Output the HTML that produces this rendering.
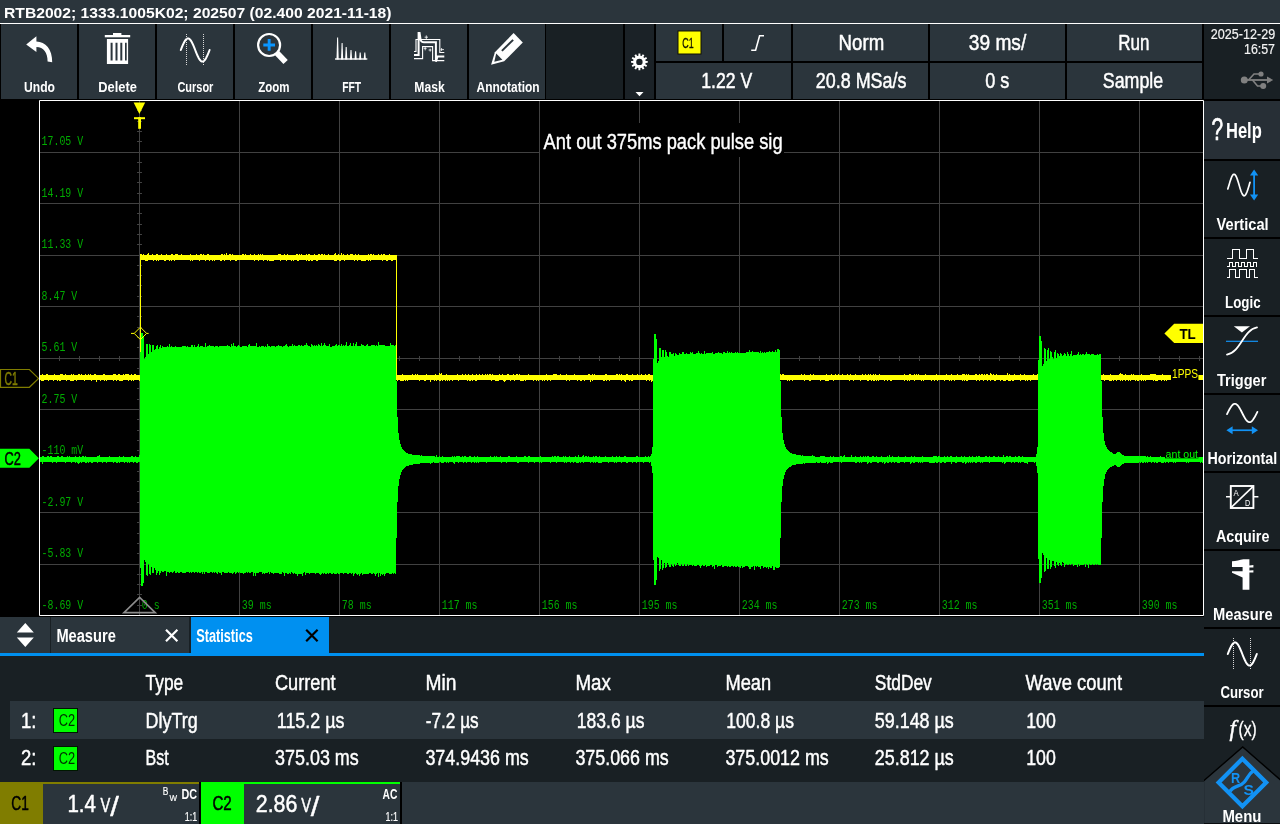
<!DOCTYPE html>
<html lang="en">
<head>
<meta charset="utf-8">
<title>RTB2002 oscilloscope - Ant out 375ms pack pulse sig</title>
<style>
  html, body { margin: 0; padding: 0; background: #000; }
  body { width: 1280px; height: 824px; overflow: hidden; }
  #screen { position: absolute; left: 0; top: 0; width: 1280px; height: 824px; background: #000; overflow: hidden; }
  svg { display: block; will-change: transform; }
  svg text { font-family: "Liberation Sans", "DejaVu Sans", sans-serif; white-space: pre; }
</style>
</head>
<body>
<div id="screen">
<svg width="1280" height="824" viewBox="0 0 1280 824">
<g id="titlebar">
<rect x="0" y="0" width="1280" height="23" fill="#2b353c"/>
<rect x="0" y="23" width="1280" height="1" fill="#ffffff"/>
<text x="4" y="18" font-size="14.6" fill="#ffffff" textLength="387.5" lengthAdjust="spacingAndGlyphs" font-weight="bold">RTB2002; 1333.1005K02; 202507 (02.400 2021-11-18)</text>
</g>
<g id="toolbar">
<rect x="1" y="24" width="76" height="75" fill="#2b353c"/>
<text x="24.0" y="92" font-size="15.5" fill="#ffffff" textLength="31" lengthAdjust="spacingAndGlyphs" font-weight="bold">Undo</text>
<rect x="79" y="24" width="76" height="75" fill="#2b353c"/>
<text x="98.3" y="92" font-size="15.5" fill="#ffffff" textLength="38.5" lengthAdjust="spacingAndGlyphs" font-weight="bold">Delete</text>
<rect x="157" y="24" width="76" height="75" fill="#2b353c"/>
<text x="177.4" y="92" font-size="15.5" fill="#ffffff" textLength="36" lengthAdjust="spacingAndGlyphs" font-weight="bold">Cursor</text>
<rect x="235" y="24" width="76" height="75" fill="#2b353c"/>
<text x="258.3" y="92" font-size="15.5" fill="#ffffff" textLength="31.3" lengthAdjust="spacingAndGlyphs" font-weight="bold">Zoom</text>
<rect x="313" y="24" width="76" height="75" fill="#2b353c"/>
<text x="342.2" y="92" font-size="15.5" fill="#ffffff" textLength="19" lengthAdjust="spacingAndGlyphs" font-weight="bold">FFT</text>
<rect x="391" y="24" width="76" height="75" fill="#2b353c"/>
<text x="414.3" y="92" font-size="15.5" fill="#ffffff" textLength="30.4" lengthAdjust="spacingAndGlyphs" font-weight="bold">Mask</text>
<rect x="469" y="24" width="76" height="75" fill="#2b353c"/>
<text x="476.5" y="92" font-size="15.5" fill="#ffffff" textLength="63.2" lengthAdjust="spacingAndGlyphs" font-weight="bold">Annotation</text>
<rect x="546" y="24" width="77" height="75" fill="#192024"/>
<rect x="625" y="24" width="29" height="75" fill="#1b2227"/>
<path d="M26.2 44.4 L36.4 36.2 L36.4 41.4 C45.5 41.6 52.4 49 52.2 62.2 L47.6 61.4 C47.6 52.6 43.6 47.2 36.4 47 L36.4 52 Z" fill="#fff"/>
<g fill="#fff"><rect x="113" y="33" width="8.4" height="2.4"/><rect x="104.8" y="35" width="25.4" height="2.3"/><path d="M106.9 39 H128.1 V64 H106.9 Z M110.6 42.8 V60.4 H112.6 V42.8 Z M115.5 42.8 V60.4 H117.5 V42.8 Z M120.3 42.8 V60.4 H122.3 V42.8 Z M125 42.8 V60.4 H126.7 V42.8 Z" fill-rule="evenodd"/></g>
<path d="M180.8 50 L181.52 48.19 L182.24 46.42 L182.96 44.73 L183.68 43.18 L184.4 41.8 L185.12 40.62 L185.84 39.66 L186.56 38.97 L187.28 38.54 L188 38.4 L188.72 38.54 L189.44 38.97 L190.16 39.66 L190.88 40.62 L191.6 41.8 L192.32 43.18 L193.04 44.73 L193.76 46.42 L194.48 48.19 L195.2 50 L195.92 51.81 L196.64 53.58 L197.36 55.27 L198.08 56.82 L198.8 58.2 L199.52 59.38 L200.24 60.34 L200.96 61.03 L201.68 61.46 L202.4 61.6 L203.12 61.46 L203.84 61.03 L204.56 60.34 L205.28 59.38 L206 58.2 L206.72 56.82 L207.44 55.27 L208.16 53.58 L208.88 51.81 L209.6 50" fill="none" stroke="#fff" stroke-width="2" stroke-linecap="round" stroke-linejoin="round"/>
<line x1="186.5" y1="34" x2="186.5" y2="65" stroke="#d8d8d8" stroke-width="1" stroke-dasharray="1 1" shape-rendering="crispEdges"/>
<line x1="203.5" y1="34" x2="203.5" y2="65" stroke="#d8d8d8" stroke-width="1" stroke-dasharray="1 1" shape-rendering="crispEdges"/>
<g><line x1="276" y1="52" x2="285.6" y2="62" stroke="#fff" stroke-width="6"/><circle cx="269.1" cy="45" r="11" fill="#2b353c" stroke="#fff" stroke-width="2.2"/><path d="M263.3 43.5 H267.7 V39 H270.6 V43.5 H275 V46.4 H270.6 V50.8 H267.7 V46.4 H263.3 Z" fill="#0a96ff"/></g>
<g fill="#fff"><rect x="335" y="58.2" width="32.3" height="1.6" opacity=".85"/>
<path d="M337.1 37.5 L338.1 37.5 L338.70000000000005 59.4 L336.5 59.4 Z"/>
<path d="M341.6 43 L342.6 43 L343.20000000000005 59.4 L341.0 59.4 Z"/>
<path d="M345.7 47 L346.7 47 L347.3 59.4 L345.09999999999997 59.4 Z"/>
<path d="M350.5 50 L351.5 50 L352.1 59.4 L349.9 59.4 Z"/>
<path d="M355.1 51.2 L356.1 51.2 L356.70000000000005 59.4 L354.5 59.4 Z"/>
<path d="M359.7 52.6 L360.7 52.6 L361.3 59.4 L359.09999999999997 59.4 Z"/>
<path d="M364.3 52.6 L365.3 52.6 L365.90000000000003 59.4 L363.7 59.4 Z"/>
</g>
<g fill="none" stroke="#fff" stroke-linejoin="miter"><path d="M414 51.5 H416 V39.5 H439.8 V52.5 H444.3" stroke-width="1.1"/><path d="M414 58.6 H422.6 V46.6 H432.6 V60.6 H444.3" stroke-width="1.1"/><path d="M414 55 H418.6 V33 L419.6 33 L420.6 40 Q421.4 42.2 424 42.2 H435.9 V61.6 L437.5 56.4 H444.3" stroke-width="2"/><path d="M424.6 37.2 H428 M426.3 35.4 V39 M423.6 48.6 H426.6 M425.2 47 V50.4 M428.6 50 H431.4 M430.2 48.6 V51.6 M440.6 49.6 H444 M441.6 48 V51" stroke-width="0.8"/></g>
<g><path d="M513.6 33.1 L522.8 42.5 L504.2 61.3 L491.1 64.8 L494.9 52.2 Z" fill="#fff"/><path d="M512.4 39.2 L513.8 40.6 L502.6 51.6 L501.2 50.2 Z" fill="#2b353c"/><path d="M496.2 53.6 L502.4 59.8 L494.3 61.8 Z" fill="#2b353c"/></g>
<path d="M647.74 60.93 L647.74 62.87 L645.62 62.89 L645.28 64.16 L647.11 65.24 L646.14 66.91 L644.3 65.86 L643.36 66.8 L644.41 68.64 L642.74 69.61 L641.66 67.78 L640.39 68.12 L640.37 70.24 L638.43 70.24 L638.41 68.12 L637.14 67.78 L636.06 69.61 L634.39 68.64 L635.44 66.8 L634.5 65.86 L632.66 66.91 L631.69 65.24 L633.52 64.16 L633.18 62.89 L631.06 62.87 L631.06 60.93 L633.18 60.91 L633.52 59.64 L631.69 58.56 L632.66 56.89 L634.5 57.94 L635.44 57 L634.39 55.16 L636.06 54.19 L637.14 56.02 L638.41 55.68 L638.43 53.56 L640.37 53.56 L640.39 55.68 L641.66 56.02 L642.74 54.19 L644.41 55.16 L643.36 57 L644.3 57.94 L646.14 56.89 L647.11 58.56 L645.28 59.64 L645.62 60.91 Z M642.6 61.9 A3.2 3.2 0 1 0 636.1999999999999 61.9 A3.2 3.2 0 1 0 642.6 61.9 Z" fill="#fff" fill-rule="evenodd"/>
<path d="M635.5 92 H643.5 L639.5 96.2 Z" fill="#fff"/>
</g>
<g id="info">
<rect x="656" y="24" width="66" height="37" fill="#2b353c"/>
<rect x="724" y="24" width="67" height="37" fill="#2b353c"/>
<rect x="656" y="63" width="135" height="36" fill="#2b353c"/>
<rect x="793" y="24" width="135" height="37" fill="#2b353c"/>
<rect x="793" y="63" width="135" height="36" fill="#2b353c"/>
<rect x="930" y="24" width="135" height="37" fill="#2b353c"/>
<rect x="930" y="63" width="135" height="36" fill="#2b353c"/>
<rect x="1067" y="24" width="135" height="37" fill="#2b353c"/>
<rect x="1067" y="63" width="135" height="36" fill="#2b353c"/>
<rect x="677.5" y="30.5" width="24" height="24" fill="#101000"/>
<rect x="678.5" y="31.5" width="22" height="22" fill="#ffff00"/>
<text x="682.2" y="48" font-size="15.2" fill="#141400" textLength="11.4" lengthAdjust="spacingAndGlyphs" stroke="#141400" stroke-width="0.35" stroke-linejoin="round">C1</text>
<path d="M751.2 50.2 H755.6 L759.6 35.8 H764" fill="none" stroke="#fff" stroke-width="1.6"/>
<text x="701.2" y="88.2" font-size="22.6" fill="#ffffff" textLength="51" lengthAdjust="spacingAndGlyphs" stroke="#ffffff" stroke-width="0.5" stroke-linejoin="round">1.22 V</text>
<text x="838.6" y="50" font-size="22.6" fill="#ffffff" textLength="45.6" lengthAdjust="spacingAndGlyphs" stroke="#ffffff" stroke-width="0.5" stroke-linejoin="round">Norm</text>
<text x="815.8" y="88.2" font-size="22.6" fill="#ffffff" textLength="90.6" lengthAdjust="spacingAndGlyphs" stroke="#ffffff" stroke-width="0.5" stroke-linejoin="round">20.8 MSa/s</text>
<text x="968.8" y="50" font-size="22.6" fill="#ffffff" textLength="57.4" lengthAdjust="spacingAndGlyphs" stroke="#ffffff" stroke-width="0.5" stroke-linejoin="round">39 ms/</text>
<text x="985.2" y="88.2" font-size="22.6" fill="#ffffff" textLength="24.2" lengthAdjust="spacingAndGlyphs" stroke="#ffffff" stroke-width="0.5" stroke-linejoin="round">0 s</text>
<text x="1118.2" y="50" font-size="22.6" fill="#ffffff" textLength="31.2" lengthAdjust="spacingAndGlyphs" stroke="#ffffff" stroke-width="0.5" stroke-linejoin="round">Run</text>
<text x="1102.8" y="88.2" font-size="22.6" fill="#ffffff" textLength="60.4" lengthAdjust="spacingAndGlyphs" stroke="#ffffff" stroke-width="0.5" stroke-linejoin="round">Sample</text>
</g>
<g id="clock">
<rect x="1204" y="24" width="76" height="75" fill="#192024"/>
<text x="1210.8" y="38.7" font-size="14.6" fill="#f4f4f4" textLength="64.4" lengthAdjust="spacingAndGlyphs" stroke="#f4f4f4" stroke-width="0.2" stroke-linejoin="round">2025-12-29</text>
<text x="1244" y="53.8" font-size="14.6" fill="#f4f4f4" textLength="31" lengthAdjust="spacingAndGlyphs" stroke="#f4f4f4" stroke-width="0.2" stroke-linejoin="round">16:57</text>
<g fill="#808080" stroke="#808080"><circle cx="1244.3" cy="80" r="3.5" stroke="none"/><path d="M1244 80 H1268" stroke-width="1.8" fill="none"/><path d="M1267 76.6 L1273.2 80 L1267 83.4 Z" stroke="none"/><path d="M1248.5 80 L1254 74 H1259.5" stroke-width="1.6" fill="none"/><circle cx="1261" cy="74" r="2.6" stroke="none"/><path d="M1252.5 80 L1257.5 86 H1261" stroke-width="1.6" fill="none"/><circle cx="1263.2" cy="86" r="3" stroke="none"/></g>
</g>
<g id="sidebar">
<rect x="1204" y="101" width="76" height="58" fill="#272f36"/>
<rect x="1204" y="161" width="76" height="76" fill="#192024"/>
<rect x="1204" y="239" width="76" height="76" fill="#192024"/>
<rect x="1204" y="317" width="76" height="76" fill="#192024"/>
<rect x="1204" y="395" width="76" height="76" fill="#192024"/>
<rect x="1204" y="473" width="76" height="76" fill="#192024"/>
<rect x="1204" y="551" width="76" height="76" fill="#192024"/>
<rect x="1204" y="629" width="76" height="76" fill="#192024"/>
<rect x="1204" y="707" width="76" height="117" fill="#192024"/>
<text x="1211.4" y="139.7" font-size="31" fill="#ffffff" textLength="11.6" lengthAdjust="spacingAndGlyphs" stroke="#ffffff" stroke-width="0.7" stroke-linejoin="round">?</text>
<text x="1226" y="137.5" font-size="21.4" fill="#ffffff" textLength="35.8" lengthAdjust="spacingAndGlyphs" font-weight="bold">Help</text>
<text x="1216.6" y="230" font-size="17.4" fill="#ffffff" textLength="52" lengthAdjust="spacingAndGlyphs" font-weight="bold">Vertical</text>
<text x="1225" y="308" font-size="17.4" fill="#ffffff" textLength="35.6" lengthAdjust="spacingAndGlyphs" font-weight="bold">Logic</text>
<text x="1217" y="386" font-size="17.4" fill="#ffffff" textLength="49.4" lengthAdjust="spacingAndGlyphs" font-weight="bold">Trigger</text>
<text x="1207.4" y="464" font-size="17.4" fill="#ffffff" textLength="69.8" lengthAdjust="spacingAndGlyphs" font-weight="bold">Horizontal</text>
<text x="1216" y="542" font-size="17.4" fill="#ffffff" textLength="53.4" lengthAdjust="spacingAndGlyphs" font-weight="bold">Acquire</text>
<text x="1213" y="620" font-size="17.4" fill="#ffffff" textLength="59.6" lengthAdjust="spacingAndGlyphs" font-weight="bold">Measure</text>
<text x="1220.4" y="698" font-size="17.4" fill="#ffffff" textLength="43.2" lengthAdjust="spacingAndGlyphs" font-weight="bold">Cursor</text>
<path d="M1227.8 188.98 L1228.26 187.49 L1228.72 185.96 L1229.19 184.41 L1229.65 182.87 L1230.11 181.37 L1230.58 179.95 L1231.04 178.63 L1231.5 177.44 L1231.96 176.41 L1232.42 175.56 L1232.89 174.91 L1233.35 174.46 L1233.81 174.23 L1234.27 174.23 L1234.74 174.44 L1235.2 174.88 L1235.66 175.52 L1236.12 176.36 L1236.59 177.38 L1237.05 178.56 L1237.51 179.87 L1237.97 181.29 L1238.44 182.78 L1238.9 184.32 L1239.36 185.88 L1239.83 187.41 L1240.29 188.9 L1240.75 190.3 L1241.21 191.6 L1241.67 192.76 L1242.14 193.75 L1242.6 194.57 L1243.06 195.19 L1243.53 195.6 L1243.99 195.79 L1244.45 195.75 L1244.91 195.49 L1245.38 195.02 L1245.84 194.34 L1246.3 193.46 L1246.76 192.41 L1247.22 191.21 L1247.69 189.88 L1248.15 188.44 L1248.61 186.94 L1249.08 185.4 L1249.54 183.84 L1250 182.31" fill="none" stroke="#fff" stroke-width="1.7" stroke-linecap="round" stroke-linejoin="round"/>
<g fill="#1292f4"><rect x="1253.2" y="174" width="1.8" height="22"/><path d="M1250 175.6 L1254.1 169.6 L1258.2 175.6 Z"/><path d="M1250 194.4 L1254.1 200.4 L1258.2 194.4 Z"/></g>
<g fill="none" stroke="#fff" stroke-width="1" shape-rendering="crispEdges"><path d="M1227 258.5 H1232.5 V249.5 H1239.5 V258.5 H1246.5 V249.5 H1253.5 V258.5 H1257.5"/><path d="M1227 266.5 H1229.5 V262.5 H1232.5 V266.5 H1235.5 V262.5 H1238.5 V266.5 H1241.5 V262.5 H1244.5 V266.5 H1247.5 V262.5 H1250.5 V266.5 H1253.5 V262.5 H1256.5 V266.5"/><path d="M1227 277.5 H1229.5 V269.5 H1235.5 V277.5 H1239.5 V269.5 H1246.5 V277.5 H1249.5 V269.5 H1254.5 V277.5 H1257.5"/></g>
<g><path d="M1233.8 326.2 H1250 L1241.9 332.6 Z" fill="#fff"/><path d="M1226 341.3 H1258" stroke="#1292f4" stroke-width="1.2"/><path d="M1227 354.6 C1241 352 1243 330 1257 327.4" fill="none" stroke="#fff" stroke-width="1.8" stroke-linecap="round"/></g>
<path d="M1227 414.15 L1227.63 412.9 L1228.27 411.66 L1228.9 410.43 L1229.53 409.26 L1230.17 408.15 L1230.8 407.14 L1231.43 406.23 L1232.07 405.45 L1232.7 404.8 L1233.33 404.31 L1233.97 403.98 L1234.6 403.82 L1235.23 403.82 L1235.87 404 L1236.5 404.34 L1237.13 404.85 L1237.77 405.5 L1238.4 406.29 L1239.03 407.21 L1239.67 408.23 L1240.3 409.35 L1240.93 410.53 L1241.57 411.75 L1242.2 413 L1242.83 414.25 L1243.47 415.47 L1244.1 416.65 L1244.73 417.77 L1245.37 418.79 L1246 419.71 L1246.63 420.5 L1247.27 421.15 L1247.9 421.66 L1248.53 422 L1249.17 422.18 L1249.8 422.18 L1250.43 422.02 L1251.07 421.69 L1251.7 421.2 L1252.33 420.55 L1252.97 419.77 L1253.6 418.86 L1254.23 417.85 L1254.87 416.74 L1255.5 415.57 L1256.13 414.34 L1256.77 413.1 L1257.4 411.85" fill="none" stroke="#fff" stroke-width="1.8" stroke-linecap="round" stroke-linejoin="round"/>
<g fill="#1292f4"><rect x="1231" y="429.4" width="22" height="1.7"/><path d="M1232.6 426.2 L1226.4 430.2 L1232.6 434.2 Z"/><path d="M1251.8 426.2 L1258 430.2 L1251.8 434.2 Z"/></g>
<g fill="none" stroke="#fff"><rect x="1230.8" y="486" width="22.6" height="22" stroke-width="1.9"/><path d="M1226 496.8 H1230 M1254 496.8 H1258.4" stroke-width="1.4"/><path d="M1231 507.6 L1253.2 486.4" stroke-width="1.6"/></g>
<text x="1233.4" y="496.4" font-size="8.6" fill="#fff" textLength="5.2" lengthAdjust="spacingAndGlyphs">A</text>
<text x="1245" y="506.4" font-size="8.6" fill="#fff" textLength="5.2" lengthAdjust="spacingAndGlyphs">D</text>
<path d="M1232 561.2 C1236 561 1240 560 1243.4 559.2 H1249.4 V565.4 L1253.4 565 V567.4 H1249.4 V570.4 L1253.4 570.2 V572.4 L1249.4 572.6 V589.8 H1242.6 V577.4 L1232 572.8 V571.2 H1242.6 V567 H1232 Z" fill="#fff"/>
<path d="M1227.8 654 L1228.52 652.19 L1229.25 650.42 L1229.97 648.73 L1230.7 647.18 L1231.42 645.8 L1232.15 644.62 L1232.88 643.66 L1233.6 642.97 L1234.33 642.54 L1235.05 642.4 L1235.77 642.54 L1236.5 642.97 L1237.22 643.66 L1237.95 644.62 L1238.67 645.8 L1239.4 647.18 L1240.12 648.73 L1240.85 650.42 L1241.58 652.19 L1242.3 654 L1243.02 655.81 L1243.75 657.58 L1244.47 659.27 L1245.2 660.82 L1245.92 662.2 L1246.65 663.38 L1247.38 664.34 L1248.1 665.03 L1248.83 665.46 L1249.55 665.6 L1250.27 665.46 L1251 665.03 L1251.72 664.34 L1252.45 663.38 L1253.17 662.2 L1253.9 660.82 L1254.62 659.27 L1255.35 657.58 L1256.08 655.81 L1256.8 654" fill="none" stroke="#fff" stroke-width="2" stroke-linecap="round" stroke-linejoin="round"/>
<line x1="1233.5" y1="638" x2="1233.5" y2="669" stroke="#d8d8d8" stroke-width="1" stroke-dasharray="1 1" shape-rendering="crispEdges"/>
<line x1="1250.5" y1="638" x2="1250.5" y2="669" stroke="#d8d8d8" stroke-width="1" stroke-dasharray="1 1" shape-rendering="crispEdges"/>
<text x="1229.4" y="736" font-size="23" fill="#ffffff" stroke="#ffffff" stroke-width="0.45" stroke-linejoin="round" font-style="italic" style="font-family:'Liberation Serif','DejaVu Serif',serif">f</text>
<text x="1238.6" y="736" font-size="20" fill="#ffffff" textLength="18.2" lengthAdjust="spacingAndGlyphs" stroke="#ffffff" stroke-width="0.3" stroke-linejoin="round">(x)</text>
<path d="M1203.4 824 V781 L1242.7 747 L1281 780.4 V824 Z" fill="#2b353c" stroke="#000" stroke-width="1.4"/>
<g><path d="M1242.4 758.7 L1266.2 782.5 L1242.4 806.3 L1218.6 782.5 Z" fill="none" stroke="#1292f4" stroke-width="4.2"/><path d="M1230 791.4 C1233.6 785 1240 787.4 1244.4 782 C1247.6 778 1248.6 774 1254 770.2" fill="none" stroke="#1292f4" stroke-width="3.4"/></g>
<text x="1231" y="782.6" font-size="14.6" fill="#1292f4" textLength="9.2" lengthAdjust="spacingAndGlyphs" font-weight="bold">R</text>
<text x="1243.4" y="794.6" font-size="15" fill="#1292f4" textLength="10.4" lengthAdjust="spacingAndGlyphs" font-weight="bold">S</text>
<text x="1222.4" y="822" font-size="16.6" fill="#ffffff" textLength="39" lengthAdjust="spacingAndGlyphs" font-weight="bold">Menu</text>
</g>
<g id="plot">
<rect x="39" y="100" width="1165" height="516" fill="#000"/>
<path d="M139.5 101 V615 M239.5 101 V615 M339.5 101 V615 M439.5 101 V615 M539.5 101 V615 M639.5 101 V615 M739.5 101 V615 M839.5 101 V615 M939.5 101 V615 M1039.5 101 V615 M1139.5 101 V615 M40 152.5 H1203 M40 203.5 H1203 M40 255.5 H1203 M40 306.5 H1203 M40 358.5 H1203 M40 409.5 H1203 M40 461.5 H1203 M40 512.5 H1203 M40 564.5 H1203" stroke="#414141" stroke-width="1" fill="none"/>
<path d="M59.5 356 V361 M79.5 356 V361 M99.5 356 V361 M119.5 356 V361 M159.5 356 V361 M179.5 356 V361 M199.5 356 V361 M219.5 356 V361 M259.5 356 V361 M279.5 356 V361 M299.5 356 V361 M319.5 356 V361 M359.5 356 V361 M379.5 356 V361 M399.5 356 V361 M419.5 356 V361 M459.5 356 V361 M479.5 356 V361 M499.5 356 V361 M519.5 356 V361 M559.5 356 V361 M579.5 356 V361 M599.5 356 V361 M619.5 356 V361 M659.5 356 V361 M679.5 356 V361 M699.5 356 V361 M719.5 356 V361 M759.5 356 V361 M779.5 356 V361 M799.5 356 V361 M819.5 356 V361 M859.5 356 V361 M879.5 356 V361 M899.5 356 V361 M919.5 356 V361 M959.5 356 V361 M979.5 356 V361 M999.5 356 V361 M1019.5 356 V361 M1059.5 356 V361 M1079.5 356 V361 M1099.5 356 V361 M1119.5 356 V361 M1159.5 356 V361 M1179.5 356 V361 M1199.5 356 V361 M137 110.5 H142 M137 121.5 H142 M137 131.5 H142 M137 141.5 H142 M137 162.5 H142 M137 172.5 H142 M137 182.5 H142 M137 193.5 H142 M137 213.5 H142 M137 224.5 H142 M137 234.5 H142 M137 244.5 H142 M137 265.5 H142 M137 275.5 H142 M137 285.5 H142 M137 296.5 H142 M137 316.5 H142 M137 327.5 H142 M137 337.5 H142 M137 347.5 H142 M137 368.5 H142 M137 378.5 H142 M137 388.5 H142 M137 399.5 H142 M137 419.5 H142 M137 430.5 H142 M137 440.5 H142 M137 450.5 H142 M137 471.5 H142 M137 481.5 H142 M137 491.5 H142 M137 502.5 H142 M137 522.5 H142 M137 533.5 H142 M137 543.5 H142 M137 553.5 H142 M137 574.5 H142 M137 584.5 H142 M137 594.5 H142 M137 605.5 H142" stroke="#414141" stroke-width="1" fill="none"/>
<text x="41.6" y="145" font-size="12.4" fill="#00ac00" textLength="41.6" lengthAdjust="spacingAndGlyphs" style="font-family:'Liberation Mono','DejaVu Sans Mono',monospace">17.05 V</text>
<text x="41.6" y="196.5" font-size="12.4" fill="#00ac00" textLength="41.6" lengthAdjust="spacingAndGlyphs" style="font-family:'Liberation Mono','DejaVu Sans Mono',monospace">14.19 V</text>
<text x="41.6" y="248" font-size="12.4" fill="#00ac00" textLength="41.6" lengthAdjust="spacingAndGlyphs" style="font-family:'Liberation Mono','DejaVu Sans Mono',monospace">11.33 V</text>
<text x="41.6" y="299.5" font-size="12.4" fill="#00ac00" textLength="35.7" lengthAdjust="spacingAndGlyphs" style="font-family:'Liberation Mono','DejaVu Sans Mono',monospace">8.47 V</text>
<text x="41.6" y="351" font-size="12.4" fill="#00ac00" textLength="35.7" lengthAdjust="spacingAndGlyphs" style="font-family:'Liberation Mono','DejaVu Sans Mono',monospace">5.61 V</text>
<text x="41.6" y="402.5" font-size="12.4" fill="#00ac00" textLength="35.7" lengthAdjust="spacingAndGlyphs" style="font-family:'Liberation Mono','DejaVu Sans Mono',monospace">2.75 V</text>
<text x="41.6" y="454" font-size="12.4" fill="#00ac00" textLength="41.6" lengthAdjust="spacingAndGlyphs" style="font-family:'Liberation Mono','DejaVu Sans Mono',monospace">-110 mV</text>
<text x="41.6" y="505.5" font-size="12.4" fill="#00ac00" textLength="41.6" lengthAdjust="spacingAndGlyphs" style="font-family:'Liberation Mono','DejaVu Sans Mono',monospace">-2.97 V</text>
<text x="41.6" y="557" font-size="12.4" fill="#00ac00" textLength="41.6" lengthAdjust="spacingAndGlyphs" style="font-family:'Liberation Mono','DejaVu Sans Mono',monospace">-5.83 V</text>
<text x="41.6" y="608.5" font-size="12.4" fill="#00ac00" textLength="41.6" lengthAdjust="spacingAndGlyphs" style="font-family:'Liberation Mono','DejaVu Sans Mono',monospace">-8.69 V</text>
<text x="141.8" y="609" font-size="12.4" fill="#00ac00" textLength="17.9" lengthAdjust="spacingAndGlyphs" style="font-family:'Liberation Mono','DejaVu Sans Mono',monospace">0 s</text>
<text x="241.8" y="609" font-size="12.4" fill="#00ac00" textLength="29.8" lengthAdjust="spacingAndGlyphs" style="font-family:'Liberation Mono','DejaVu Sans Mono',monospace">39 ms</text>
<text x="341.8" y="609" font-size="12.4" fill="#00ac00" textLength="29.8" lengthAdjust="spacingAndGlyphs" style="font-family:'Liberation Mono','DejaVu Sans Mono',monospace">78 ms</text>
<text x="441.8" y="609" font-size="12.4" fill="#00ac00" textLength="35.7" lengthAdjust="spacingAndGlyphs" style="font-family:'Liberation Mono','DejaVu Sans Mono',monospace">117 ms</text>
<text x="541.8" y="609" font-size="12.4" fill="#00ac00" textLength="35.7" lengthAdjust="spacingAndGlyphs" style="font-family:'Liberation Mono','DejaVu Sans Mono',monospace">156 ms</text>
<text x="641.8" y="609" font-size="12.4" fill="#00ac00" textLength="35.7" lengthAdjust="spacingAndGlyphs" style="font-family:'Liberation Mono','DejaVu Sans Mono',monospace">195 ms</text>
<text x="741.8" y="609" font-size="12.4" fill="#00ac00" textLength="35.7" lengthAdjust="spacingAndGlyphs" style="font-family:'Liberation Mono','DejaVu Sans Mono',monospace">234 ms</text>
<text x="841.8" y="609" font-size="12.4" fill="#00ac00" textLength="35.7" lengthAdjust="spacingAndGlyphs" style="font-family:'Liberation Mono','DejaVu Sans Mono',monospace">273 ms</text>
<text x="941.8" y="609" font-size="12.4" fill="#00ac00" textLength="35.7" lengthAdjust="spacingAndGlyphs" style="font-family:'Liberation Mono','DejaVu Sans Mono',monospace">312 ms</text>
<text x="1041.8" y="609" font-size="12.4" fill="#00ac00" textLength="35.7" lengthAdjust="spacingAndGlyphs" style="font-family:'Liberation Mono','DejaVu Sans Mono',monospace">351 ms</text>
<text x="1141.8" y="609" font-size="12.4" fill="#00ac00" textLength="35.7" lengthAdjust="spacingAndGlyphs" style="font-family:'Liberation Mono','DejaVu Sans Mono',monospace">390 ms</text>
<rect x="540" y="123" width="244" height="34" fill="#000"/>
<text x="543.6" y="149.4" font-size="21.8" fill="#ffffff" textLength="239" lengthAdjust="spacingAndGlyphs" stroke="#ffffff" stroke-width="0.4" stroke-linejoin="round">Ant out 375ms pack pulse sig</text>
<path d="M40 375V375H41V375H42V374H43V375H44V375H45V375H46V374H47V374H48V375H49V375H50V375H51V375H52V375H53V375H54V374H55V375H56V375H57V375H58V375H59V375H60V374H61V374H62V374H63V375H64V375H65V374H66V375H67V375H68V375H69V375H70V375H71V374H72V375H73V374H74V375H75V375H76V375H77V375H78V374H79V374H80V375H81V374H82V375H83V375H84V375H85V374H86V375H87V375H88V374H89V375H90V374H91V375H92V375H93V375H94V374H95V374H96V375H97V375H98V375H99V375H100V375H101V375H102V375H103V374H104V374H105V375H106V375H107V375H108V375H109V375H110V375H111V375H112V375H113V374H114V374H115V374H116V375H117V375H118V374H119V374H120V375H121V375H122V375H123V374H124V375H125V374H126V374H127V374H128V374H129V375H130V375H131V374H132V375H133V375H134V374H135V374H136V375H137V375H138V375H139V375H140V381H139V380H138V380H137V380H136V380H135V380H134V381H133V380H132V381H131V380H130V380H129V381H128V380H127V380H126V380H125V380H124V380H123V381H122V381H121V381H120V381H119V380H118V380H117V381H116V380H115V380H114V381H113V380H112V380H111V380H110V380H109V380H108V380H107V381H106V380H105V381H104V380H103V380H102V380H101V381H100V380H99V380H98V380H97V382H96V380H95V380H94V380H93V380H92V381H91V380H90V380H89V380H88V380H87V380H86V380H85V381H84V380H83V380H82V380H81V380H80V380H79V380H78V380H77V381H76V380H75V380H74V381H73V381H72V381H71V381H70V380H69V380H68V380H67V381H66V380H65V380H64V380H63V380H62V380H61V381H60V381H59V380H58V381H57V380H56V380H55V380H54V381H53V380H52V380H51V380H50V380H49V381H48V380H47V380H46V380H45V380H44V381H43V381H42V381H41V380H40Z M140 254V254H141V254H142V255H143V254H144V255H145V255H146V255H147V254H148V253H149V255H150V255H151V255H152V254H153V255H154V255H155V255H156V254H157V254H158V255H159V255H160V255H161V254H162V255H163V255H164V255H165V255H166V254H167V255H168V255H169V255H170V255H171V254H172V254H173V255H174V255H175V254H176V254H177V254H178V255H179V255H180V255H181V254H182V255H183V255H184V255H185V255H186V255H187V255H188V255H189V255H190V254H191V255H192V255H193V255H194V255H195V255H196V254H197V255H198V255H199V255H200V254H201V254H202V255H203V254H204V255H205V255H206V255H207V254H208V254H209V255H210V255H211V255H212V255H213V255H214V255H215V255H216V255H217V255H218V255H219V255H220V255H221V254H222V254H223V255H224V254H225V255H226V253H227V255H228V255H229V254H230V254H231V255H232V254H233V255H234V255H235V255H236V255H237V255H238V255H239V255H240V255H241V255H242V254H243V254H244V255H245V254H246V255H247V255H248V255H249V255H250V254H251V255H252V255H253V255H254V254H255V255H256V255H257V255H258V254H259V255H260V254H261V255H262V254H263V255H264V255H265V255H266V255H267V255H268V255H269V255H270V255H271V255H272V255H273V255H274V255H275V255H276V255H277V255H278V254H279V254H280V254H281V255H282V255H283V255H284V254H285V255H286V255H287V254H288V255H289V255H290V255H291V255H292V255H293V255H294V255H295V255H296V254H297V254H298V255H299V254H300V255H301V254H302V255H303V255H304V255H305V255H306V254H307V255H308V254H309V254H310V255H311V255H312V255H313V255H314V254H315V255H316V255H317V255H318V254H319V254H320V255H321V254H322V254H323V255H324V254H325V255H326V255H327V255H328V254H329V255H330V255H331V255H332V255H333V255H334V254H335V253H336V255H337V255H338V254H339V255H340V255H341V253H342V255H343V254H344V255H345V255H346V255H347V254H348V255H349V255H350V254H351V254H352V254H353V255H354V255H355V254H356V255H357V255H358V254H359V255H360V255H361V255H362V255H363V255H364V255H365V255H366V255H367V255H368V254H369V255H370V254H371V254H372V255H373V254H374V255H375V255H376V255H377V255H378V254H379V255H380V255H381V254H382V255H383V254H384V254H385V255H386V255H387V255H388V255H389V254H390V255H391V255H392V255H393V255H394V255H395V255H396V255H397V260H396V260H395V260H394V260H393V261H392V261H391V260H390V260H389V260H388V261H387V261H386V260H385V260H384V260H383V261H382V260H381V260H380V260H379V260H378V260H377V260H376V260H375V260H374V260H373V260H372V260H371V261H370V260H369V261H368V260H367V260H366V261H365V261H364V261H363V261H362V261H361V260H360V260H359V260H358V261H357V260H356V260H355V261H354V260H353V260H352V260H351V260H350V260H349V260H348V260H347V260H346V260H345V261H344V260H343V260H342V260H341V261H340V261H339V260H338V260H337V261H336V261H335V261H334V260H333V260H332V260H331V260H330V260H329V260H328V260H327V260H326V260H325V260H324V260H323V260H322V260H321V260H320V260H319V260H318V261H317V261H316V260H315V260H314V260H313V261H312V261H311V260H310V261H309V261H308V260H307V261H306V260H305V260H304V260H303V260H302V260H301V260H300V260H299V261H298V261H297V260H296V260H295V260H294V261H293V260H292V261H291V260H290V260H289V260H288V260H287V261H286V260H285V260H284V260H283V260H282V260H281V261H280V260H279V260H278V260H277V260H276V260H275V260H274V261H273V261H272V261H271V261H270V261H269V260H268V261H267V260H266V260H265V260H264V261H263V260H262V260H261V260H260V260H259V261H258V260H257V260H256V260H255V261H254V260H253V260H252V260H251V260H250V260H249V260H248V260H247V260H246V260H245V260H244V260H243V260H242V260H241V260H240V260H239V260H238V260H237V261H236V261H235V260H234V260H233V260H232V260H231V261H230V260H229V260H228V260H227V260H226V260H225V261H224V260H223V260H222V261H221V261H220V260H219V260H218V260H217V260H216V260H215V261H214V260H213V261H212V260H211V260H210V261H209V260H208V260H207V260H206V261H205V260H204V260H203V260H202V260H201V260H200V261H199V260H198V260H197V260H196V260H195V260H194V260H193V261H192V260H191V261H190V260H189V260H188V260H187V260H186V260H185V260H184V260H183V260H182V260H181V260H180V260H179V260H178V260H177V260H176V260H175V261H174V260H173V260H172V261H171V260H170V261H169V260H168V260H167V260H166V261H165V261H164V260H163V260H162V260H161V260H160V260H159V261H158V260H157V261H156V260H155V260H154V261H153V260H152V260H151V260H150V260H149V260H148V261H147V261H146V261H145V260H144V260H143V260H142V260H141V260H140Z M396 375V375H397V375H398V375H399V375H400V375H401V375H402V374H403V375H404V375H405V375H406V375H407V375H408V375H409V375H410V375H411V375H412V374H413V375H414V375H415V374H416V375H417V374H418V375H419V375H420V375H421V375H422V375H423V375H424V375H425V375H426V374H427V375H428V375H429V375H430V375H431V375H432V375H433V375H434V375H435V374H436V375H437V375H438V375H439V373H440V374H441V373H442V375H443V375H444V375H445V375H446V374H447V375H448V375H449V375H450V375H451V375H452V375H453V375H454V375H455V375H456V375H457V374H458V375H459V375H460V375H461V375H462V374H463V375H464V375H465V374H466V375H467V375H468V374H469V375H470V375H471V375H472V374H473V375H474V375H475V375H476V374H477V375H478V375H479V374H480V375H481V375H482V374H483V375H484V375H485V374H486V375H487V374H488V375H489V374H490V374H491V375H492V374H493V375H494V375H495V375H496V375H497V375H498V375H499V374H500V375H501V375H502V374H503V375H504V375H505V375H506V375H507V374H508V374H509V375H510V375H511V375H512V375H513V374H514V375H515V375H516V374H517V374H518V375H519V374H520V375H521V375H522V375H523V375H524V375H525V375H526V375H527V375H528V374H529V375H530V375H531V375H532V375H533V375H534V375H535V375H536V375H537V375H538V375H539V375H540V375H541V375H542V375H543V375H544V375H545V375H546V374H547V375H548V375H549V375H550V375H551V375H552V375H553V374H554V374H555V374H556V374H557V375H558V375H559V375H560V374H561V375H562V375H563V375H564V375H565V375H566V374H567V375H568V375H569V375H570V375H571V375H572V375H573V375H574V374H575V375H576V375H577V375H578V375H579V375H580V375H581V375H582V375H583V375H584V375H585V375H586V375H587V375H588V374H589V374H590V375H591V375H592V374H593V375H594V374H595V375H596V375H597V375H598V375H599V375H600V375H601V375H602V375H603V375H604V375H605V374H606V374H607V375H608V375H609V375H610V375H611V375H612V375H613V375H614V375H615V375H616V374H617V374H618V375H619V374H620V375H621V374H622V375H623V375H624V375H625V375H626V374H627V374H628V375H629V375H630V375H631V375H632V374H633V375H634V375H635V375H636V375H637V374H638V375H639V375H640V375H641V374H642V375H643V375H644V375H645V374H646V375H647V375H648V374H649V374H650V375H651V375H652V375H653V375H654V375H655V375H656V375H657V374H658V374H659V374H660V375H661V375H662V375H663V375H664V375H665V375H666V375H667V375H668V375H669V375H670V375H671V375H672V375H673V375H674V375H675V375H676V375H677V375H678V374H679V374H680V375H681V374H682V374H683V375H684V375H685V375H686V375H687V375H688V374H689V375H690V375H691V374H692V375H693V375H694V374H695V375H696V375H697V375H698V374H699V374H700V373H701V374H702V375H703V375H704V375H705V374H706V375H707V375H708V374H709V375H710V375H711V374H712V375H713V375H714V375H715V374H716V375H717V375H718V375H719V375H720V375H721V375H722V375H723V374H724V375H725V375H726V375H727V374H728V375H729V374H730V374H731V375H732V375H733V375H734V375H735V374H736V375H737V375H738V374H739V375H740V374H741V375H742V375H743V375H744V375H745V375H746V375H747V375H748V375H749V375H750V375H751V374H752V375H753V374H754V373H755V375H756V375H757V374H758V375H759V375H760V375H761V375H762V375H763V374H764V375H765V375H766V375H767V374H768V375H769V374H770V374H771V374H772V375H773V374H774V374H775V375H776V375H777V374H778V374H779V375H780V374H781V375H782V374H783V374H784V375H785V375H786V375H787V375H788V375H789V375H790V375H791V375H792V375H793V375H794V375H795V375H796V375H797V375H798V375H799V375H800V375H801V374H802V375H803V375H804V374H805V375H806V375H807V375H808V375H809V375H810V374H811V375H812V375H813V374H814V375H815V375H816V375H817V375H818V375H819V375H820V375H821V375H822V375H823V375H824V375H825V375H826V374H827V375H828V375H829V375H830V375H831V374H832V375H833V375H834V375H835V374H836V375H837V375H838V374H839V375H840V375H841V375H842V374H843V375H844V375H845V375H846V375H847V374H848V375H849V375H850V374H851V375H852V375H853V375H854V375H855V374H856V375H857V375H858V375H859V375H860V375H861V375H862V374H863V375H864V375H865V374H866V375H867V375H868V374H869V375H870V374H871V375H872V375H873V374H874V375H875V374H876V375H877V375H878V375H879V374H880V375H881V375H882V375H883V375H884V375H885V375H886V375H887V375H888V375H889V375H890V375H891V375H892V375H893V375H894V375H895V375H896V375H897V375H898V375H899V375H900V375H901V375H902V375H903V375H904V374H905V375H906V375H907V375H908V375H909V374H910V374H911V375H912V375H913V375H914V374H915V375H916V374H917V375H918V374H919V375H920V375H921V375H922V375H923V375H924V375H925V374H926V375H927V375H928V375H929V375H930V375H931V375H932V375H933V375H934V375H935V375H936V374H937V375H938V375H939V375H940V375H941V375H942V375H943V375H944V375H945V375H946V374H947V375H948V375H949V375H950V375H951V374H952V375H953V375H954V375H955V375H956V375H957V374H958V375H959V375H960V375H961V375H962V374H963V374H964V374H965V375H966V374H967V375H968V374H969V375H970V375H971V375H972V375H973V375H974V375H975V374H976V374H977V375H978V375H979V374H980V375H981V374H982V374H983V375H984V374H985V375H986V374H987V374H988V375H989V375H990V373H991V374H992V375H993V374H994V375H995V375H996V374H997V375H998V375H999V375H1000V375H1001V375H1002V375H1003V375H1004V375H1005V375H1006V375H1007V373H1008V375H1009V374H1010V375H1011V375H1012V375H1013V375H1014V374H1015V375H1016V375H1017V375H1018V375H1019V375H1020V374H1021V375H1022V375H1023V375H1024V374H1025V375H1026V375H1027V375H1028V375H1029V375H1030V375H1031V375H1032V375H1033V374H1034V375H1035V375H1036V375H1037V374H1038V374H1039V374H1040V375H1041V374H1042V375H1043V375H1044V373H1045V374H1046V375H1047V375H1048V375H1049V374H1050V375H1051V374H1052V375H1053V374H1054V375H1055V374H1056V375H1057V375H1058V375H1059V375H1060V375H1061V375H1062V374H1063V375H1064V375H1065V374H1066V375H1067V375H1068V375H1069V375H1070V374H1071V375H1072V374H1073V375H1074V375H1075V375H1076V375H1077V375H1078V375H1079V375H1080V375H1081V375H1082V374H1083V375H1084V375H1085V375H1086V375H1087V374H1088V374H1089V375H1090V374H1091V375H1092V375H1093V375H1094V375H1095V374H1096V375H1097V375H1098V375H1099V375H1100V375H1101V375H1102V375H1103V374H1104V375H1105V375H1106V375H1107V375H1108V375H1109V375H1110V374H1111V375H1112V375H1113V375H1114V375H1115V375H1116V375H1117V375H1118V375H1119V374H1120V373H1121V374H1122V374H1123V375H1124V375H1125V374H1126V375H1127V375H1128V375H1129V375H1130V375H1131V374H1132V375H1133V374H1134V375H1135V375H1136V375H1137V375H1138V375H1139V375H1140V375H1141V374H1142V375H1143V375H1144V375H1145V375H1146V375H1147V375H1148V375H1149V375H1150V374H1151V374H1152V374H1153V374H1154V374H1155V374H1156V375H1157V375H1158V375H1159V375H1160V375H1161V375H1162V374H1163V375H1164V375H1165V375H1166V375H1167V375H1168V375H1169V375H1170V375H1171V380H1170V380H1169V380H1168V380H1167V381H1166V380H1165V381H1164V380H1163V380H1162V381H1161V380H1160V380H1159V380H1158V381H1157V381H1156V381H1155V380H1154V381H1153V380H1152V380H1151V380H1150V380H1149V380H1148V380H1147V380H1146V381H1145V380H1144V381H1143V380H1142V381H1141V380H1140V380H1139V381H1138V381H1137V380H1136V381H1135V380H1134V380H1133V380H1132V380H1131V381H1130V380H1129V381H1128V380H1127V380H1126V381H1125V380H1124V380H1123V381H1122V380H1121V381H1120V380H1119V380H1118V380H1117V381H1116V380H1115V380H1114V381H1113V380H1112V381H1111V381H1110V381H1109V380H1108V380H1107V380H1106V380H1105V381H1104V380H1103V380H1102V380H1101V381H1100V380H1099V381H1098V380H1097V380H1096V382H1095V380H1094V380H1093V380H1092V380H1091V381H1090V381H1089V380H1088V381H1087V380H1086V380H1085V380H1084V380H1083V380H1082V380H1081V381H1080V382H1079V380H1078V380H1077V381H1076V380H1075V381H1074V382H1073V380H1072V380H1071V380H1070V380H1069V380H1068V380H1067V381H1066V380H1065V380H1064V381H1063V380H1062V380H1061V380H1060V381H1059V380H1058V380H1057V381H1056V381H1055V380H1054V380H1053V380H1052V380H1051V380H1050V380H1049V380H1048V380H1047V381H1046V380H1045V380H1044V380H1043V380H1042V381H1041V380H1040V380H1039V380H1038V380H1037V380H1036V380H1035V380H1034V380H1033V380H1032V380H1031V381H1030V380H1029V380H1028V381H1027V380H1026V381H1025V380H1024V380H1023V380H1022V380H1021V381H1020V380H1019V380H1018V380H1017V380H1016V380H1015V380H1014V381H1013V381H1012V380H1011V381H1010V381H1009V381H1008V380H1007V380H1006V381H1005V381H1004V381H1003V380H1002V380H1001V381H1000V380H999V380H998V380H997V380H996V381H995V381H994V380H993V380H992V380H991V381H990V380H989V380H988V381H987V380H986V380H985V380H984V381H983V380H982V380H981V380H980V381H979V380H978V380H977V381H976V380H975V380H974V380H973V380H972V380H971V380H970V380H969V380H968V381H967V381H966V380H965V381H964V380H963V381H962V380H961V380H960V380H959V380H958V380H957V380H956V380H955V381H954V380H953V380H952V381H951V380H950V381H949V380H948V380H947V380H946V380H945V381H944V380H943V380H942V380H941V380H940V380H939V380H938V381H937V380H936V380H935V381H934V380H933V380H932V381H931V380H930V380H929V380H928V380H927V380H926V380H925V380H924V381H923V380H922V381H921V380H920V380H919V380H918V380H917V380H916V380H915V381H914V380H913V380H912V380H911V380H910V381H909V380H908V381H907V380H906V380H905V381H904V380H903V380H902V380H901V380H900V380H899V380H898V380H897V380H896V380H895V380H894V380H893V380H892V381H891V381H890V380H889V380H888V381H887V380H886V380H885V381H884V380H883V380H882V380H881V380H880V380H879V381H878V380H877V381H876V380H875V381H874V381H873V380H872V381H871V380H870V380H869V381H868V381H867V380H866V380H865V380H864V380H863V380H862V380H861V381H860V380H859V380H858V380H857V380H856V380H855V380H854V381H853V380H852V380H851V380H850V381H849V380H848V380H847V380H846V380H845V380H844V380H843V380H842V380H841V380H840V380H839V380H838V380H837V380H836V380H835V380H834V381H833V380H832V380H831V380H830V380H829V381H828V381H827V381H826V381H825V380H824V380H823V380H822V380H821V381H820V380H819V380H818V380H817V380H816V380H815V380H814V380H813V380H812V380H811V381H810V381H809V380H808V380H807V380H806V380H805V381H804V380H803V380H802V380H801V380H800V380H799V380H798V380H797V380H796V380H795V380H794V380H793V381H792V380H791V380H790V381H789V380H788V381H787V380H786V380H785V380H784V380H783V380H782V380H781V380H780V380H779V380H778V381H777V381H776V381H775V380H774V380H773V380H772V380H771V381H770V381H769V380H768V380H767V380H766V381H765V380H764V380H763V381H762V380H761V380H760V380H759V381H758V381H757V380H756V380H755V380H754V380H753V380H752V381H751V380H750V380H749V382H748V380H747V380H746V380H745V380H744V380H743V381H742V380H741V380H740V380H739V381H738V380H737V380H736V380H735V380H734V380H733V380H732V380H731V381H730V380H729V380H728V380H727V380H726V380H725V381H724V380H723V380H722V380H721V381H720V380H719V380H718V380H717V380H716V380H715V380H714V380H713V381H712V381H711V380H710V381H709V381H708V380H707V380H706V381H705V380H704V381H703V380H702V380H701V381H700V380H699V380H698V380H697V380H696V381H695V380H694V380H693V380H692V381H691V380H690V380H689V380H688V380H687V380H686V380H685V381H684V380H683V380H682V380H681V380H680V380H679V380H678V380H677V380H676V380H675V380H674V380H673V381H672V380H671V380H670V380H669V380H668V381H667V382H666V380H665V381H664V380H663V380H662V380H661V380H660V380H659V380H658V380H657V380H656V380H655V381H654V381H653V381H652V382H651V380H650V381H649V380H648V380H647V381H646V380H645V380H644V380H643V380H642V380H641V380H640V380H639V380H638V380H637V380H636V380H635V380H634V380H633V381H632V381H631V380H630V381H629V380H628V380H627V380H626V382H625V381H624V380H623V380H622V381H621V380H620V380H619V380H618V380H617V380H616V380H615V380H614V380H613V380H612V380H611V380H610V381H609V380H608V380H607V381H606V380H605V381H604V381H603V380H602V380H601V380H600V380H599V380H598V380H597V380H596V380H595V380H594V380H593V381H592V380H591V382H590V380H589V380H588V380H587V380H586V380H585V381H584V380H583V380H582V381H581V381H580V380H579V380H578V381H577V380H576V380H575V380H574V380H573V380H572V380H571V380H570V381H569V380H568V380H567V381H566V380H565V380H564V380H563V380H562V380H561V380H560V380H559V380H558V380H557V380H556V380H555V380H554V380H553V380H552V380H551V381H550V380H549V380H548V381H547V380H546V380H545V381H544V380H543V381H542V380H541V380H540V380H539V381H538V380H537V381H536V380H535V380H534V381H533V380H532V380H531V380H530V380H529V380H528V380H527V380H526V381H525V380H524V381H523V381H522V381H521V381H520V380H519V380H518V380H517V380H516V380H515V381H514V380H513V380H512V380H511V381H510V380H509V380H508V380H507V380H506V381H505V382H504V381H503V380H502V380H501V380H500V380H499V381H498V381H497V381H496V381H495V380H494V380H493V380H492V381H491V380H490V380H489V380H488V380H487V380H486V380H485V380H484V380H483V380H482V380H481V380H480V380H479V380H478V380H477V381H476V381H475V380H474V380H473V381H472V380H471V381H470V381H469V380H468V381H467V380H466V380H465V380H464V380H463V380H462V380H461V380H460V380H459V381H458V380H457V380H456V380H455V380H454V380H453V381H452V380H451V380H450V381H449V380H448V381H447V380H446V381H445V380H444V380H443V381H442V380H441V381H440V381H439V380H438V380H437V381H436V380H435V381H434V380H433V380H432V380H431V382H430V380H429V380H428V380H427V380H426V381H425V381H424V380H423V380H422V380H421V380H420V381H419V380H418V380H417V380H416V380H415V380H414V380H413V380H412V380H411V380H410V380H409V380H408V381H407V380H406V381H405V380H404V381H403V381H402V381H401V381H400V380H399V380H398V381H397V380H396Z M1198 375V375H1199V375H1200V375H1201V375H1202V375H1203V380H1202V380H1201V380H1200V380H1199V380H1198Z" fill="#ffff00" shape-rendering="crispEdges"/>
<path d="M140.5 255 V378 M396.5 255 V378" stroke="#ffff00" stroke-width="1" fill="none" shape-rendering="crispEdges"/>
<path d="M40 456.8V456.8H41V457.4H42V456.1H43V456.4H44V457.1H45V457.1H46V457.4H47V456H48V456.4H49V457.4H50V455.6H51V456.2H52V457H53V456.9H54V456.8H55V456.7H56V456.8H57V456.4H58V456.3H59V456.9H60V456.8H61V456H62V456.3H63V456.7H64V457.1H65V456.7H66V457.2H67V455.6H68V456.8H69V456.1H70V456.9H71V457.4H72V457.2H73V457.1H74V457.2H75V456.1H76V456.7H77V456.7H78V456.9H79V456.2H80V457.3H81V456.7H82V456.4H83V456.2H84V456.8H85V456.2H86V456.8H87V457H88V457H89V456.8H90V457H91V457.4H92V457H93V457.4H94V457H95V457.2H96V457H97V455.6H98V456H99V455H100V457.1H101V456.8H102V456.8H103V457H104V457.1H105V457.3H106V456.9H107V457.2H108V456.8H109V455.5H110V457.4H111V457.2H112V457.2H113V457.4H114V456.9H115V457.4H116V457.4H117V457.3H118V457.1H119V455.7H120V456.7H121V456.9H122V457.3H123V455.8H124V457.1H125V457.1H126V456.8H127V457.4H128V456.5H129V456.5H130V457H131V455.8H132V456H133V457.2H134V457.3H135V456H136V456.7H137V456.9H138V457.2H139V454.6H140V351.5H141V333H142V333H143V336.4H144V358.8H145V356.6H146V344.1H147V344.1H148V354.4H149V344.3H150V345.3H151V351.5H152V345.2H153V345.4H154V350.3H155V349.2H156V345.8H157V345H158V348.7H159V346.7H160V345.4H161V348.1H162V346.3H163V346.6H164V347.1H165V346.9H166V346.9H167V345.7H168V346.5H169V344H170V346.9H171V346.2H172V346.7H173V346.9H174V347.2H175V346H176V347.1H177V346.7H178V346.6H179V347.1H180V347.1H181V347.2H182V346H183V346H184V346.4H185V346.2H186V347.2H187V346.4H188V346.5H189V346.7H190V346.5H191V344.8H192V344.8H193V346.5H194V344.7H195V346.8H196V346.5H197V345.6H198V343.8H199V346.6H200V345.6H201V345.9H202V346.2H203V346.7H204V346.8H205V343.1H206V346.7H207V346.2H208V345.6H209V344.6H210V345.6H211V345.9H212V345.5H213V346.2H214V346.9H215V345.7H216V346.1H217V346.2H218V346.6H219V346.2H220V345.8H221V346.4H222V345.8H223V345.7H224V345.6H225V345.6H226V345.8H227V344.6H228V346.2H229V346H230V346.8H231V344.2H232V345.5H233V342.7H234V345.7H235V346H236V346.7H237V346.1H238V345.2H239V345.9H240V346.7H241V346.6H242V345.6H243V346H244V346.4H245V345.9H246V346.4H247V346.5H248V345.4H249V343.6H250V346.1H251V345.5H252V346.1H253V346H254V346.2H255V345.6H256V342.8H257V346.7H258V346.8H259V345.7H260V346.8H261V346H262V346H263V346.1H264V346.6H265V345.6H266V346.6H267V344.3H268V346.1H269V346.4H270V346.7H271V345.8H272V345.5H273V345.8H274V346.4H275V346.6H276V346.1H277V345.6H278V344.7H279V345.5H280V346H281V346.2H282V346.6H283V345.7H284V345.5H285V345.3H286V344.4H287V345.5H288V346.5H289V346.4H290V345.6H291V346.4H292V344.1H293V346.4H294V345.1H295V345.9H296V346.4H297V346.1H298V345.1H299V345.1H300V346.1H301V345.2H302V346H303V345.7H304V345.1H305V345.2H306V342.7H307V345H308V345.7H309V345.9H310V346.6H311V344.2H312V345.3H313V345.6H314V345H315V345.8H316V345H317V345.9H318V344.3H319V344.9H320V346.1H321V343.4H322V346.1H323V344.9H324V342.8H325V345.1H326V346.4H327V345.8H328V345.6H329V344.2H330V346.5H331V346.5H332V345.9H333V346.3H334V346H335V345.4H336V344.1H337V346H338V345.2H339V345.2H340V346H341V344.4H342V345.9H343V344.8H344V345.5H345V344.9H346V342.3H347V346.1H348V345.5H349V345.4H350V343.1H351V346.2H352V345.7H353V343.3H354V346.2H355V344.1H356V342.4H357V346.1H358V345.9H359V345.8H360V345.9H361V343.7H362V345H363V344.8H364V345.5H365V346.2H366V344.8H367V344.2H368V346.2H369V346.1H370V345.5H371V344.7H372V345.2H373V345.1H374V344.9H375V345.8H376V345.1H377V345.8H378V342H379V344.8H380V344.6H381V344.7H382V344.9H383V345.3H384V345.4H385V345.5H386V346.1H387V345.5H388V345.9H389V345.7H390V342.6H391V344.6H392V345.4H393V345.2H394V345.8H395V345.3H396V381.2H397V417H398V432.7H399V440.3H400V444.4H401V446.9H402V448.7H403V449.9H404V451H405V451.9H406V452.6H407V452.8H408V453.6H409V453.8H410V454.3H411V454.1H412V454.7H413V455H414V455.1H415V455.3H416V455.4H417V455.3H418V455.2H419V455.4H420V455.5H421V455H422V455.9H423V456H424V456.1H425V455.8H426V455.9H427V456.1H428V456.1H429V456H430V456H431V456.2H432V456.3H433V456.4H434V456.1H435V456.6H436V455.4H437V456.6H438V456.8H439V456.3H440V456.8H441V456.5H442V456.4H443V456.7H444V456.5H445V456.9H446V456.8H447V456.9H448V456.6H449V456.9H450V456.5H451V456.7H452V455.9H453V457.1H454V456.1H455V456.7H456V455.9H457V456.1H458V455.7H459V456.1H460V456.9H461V456.7H462V456.2H463V456.8H464V455.6H465V456H466V457.2H467V456.9H468V456.8H469V455.9H470V456.1H471V456.8H472V457H473V456.8H474V456.4H475V456.7H476V456.8H477V455.8H478V456.7H479V456.8H480V457.3H481V457.2H482V456.7H483V457.1H484V456.8H485V457.1H486V457.4H487V457.2H488V456.8H489V457.3H490V456H491V457.4H492V456.9H493V457.4H494V456.4H495V457.2H496V456.1H497V456.9H498V457.1H499V456.7H500V456H501V457H502V456.7H503V456.8H504V456.8H505V457.2H506V457.3H507V457.2H508V456.4H509V455.7H510V457.1H511V456.8H512V456.7H513V457H514V457.2H515V456.8H516V455.5H517V457H518V457.3H519V456.9H520V457.1H521V457H522V457.2H523V456.8H524V456.1H525V456.3H526V457.2H527V457.4H528V455.6H529V455.7H530V457.2H531V457.1H532V456.8H533V456.9H534V457.4H535V457.4H536V457.4H537V457.1H538V456.9H539V456.9H540V455.7H541V456.9H542V457.3H543V456.7H544V457.2H545V457.2H546V457.4H547V457.2H548V457.1H549V456.7H550V456.8H551V456.7H552V455.9H553V457.2H554V455.7H555V455.8H556V457.4H557V456.4H558V456H559V456.9H560V457.4H561V457H562V456.8H563V456.4H564V457.2H565V456.2H566V456.9H567V457.2H568V456.9H569V455.9H570V457.4H571V456.9H572V457H573V457.1H574V456.8H575V456.4H576V457H577V457.4H578V455.4H579V456.8H580V457.1H581V457.3H582V456.2H583V455.4H584V456.8H585V456H586V456.4H587V457.1H588V455.8H589V456.9H590V457.4H591V456.7H592V456.8H593V456H594V456.8H595V455.5H596V455.6H597V456.8H598V457.2H599V456H600V457H601V457.3H602V457.4H603V457.4H604V457.4H605V456.2H606V457.4H607V457.4H608V457.3H609V457.4H610V457H611V456.9H612V455.6H613V456.7H614V456.8H615V457.2H616V456.3H617V457H618V456.7H619V455.8H620V457.2H621V457.4H622V457.4H623V456.9H624V456.4H625V456.4H626V456.8H627V457H628V456.9H629V457.3H630V457.4H631V457.2H632V456.8H633V457.3H634V456.7H635V456.6H636V455.6H637V456.1H638V457.1H639V456.8H640V456.9H641V457.2H642V456.7H643V456.9H644V457H645V455.8H646V456.9H647V456.8H648V455.8H649V456.8H650V456.4H651V453.5H652V446.5H653V359.3H654V334.3H655V334.3H656V339.2H657V362.7H658V360.7H659V348.1H660V347.8H661V357.1H662V349.9H663V349.9H664V357H665V349.8H666V352.1H667V356.4H668V356.9H669V351.7H670V351.7H671V353.5H672V353.5H673V353H674V355.7H675V352.7H676V353.6H677V354.8H678V354.8H679V353H680V353.8H681V353.8H682V352.1H683V351.9H684V354.1H685V353.9H686V353.3H687V353.9H688V354.3H689V353.5H690V352.4H691V353.2H692V352.3H693V354.1H694V354.1H695V354H696V352.9H697V352.8H698V351.3H699V352.7H700V354.3H701V353.4H702V354H703V353.5H704V350.8H705V353.5H706V352.8H707V352.7H708V353.4H709V353.1H710V352.8H711V353H712V352H713V353.5H714V353.5H715V352.5H716V353.1H717V353.4H718V352.4H719V353H720V353.4H721V353H722V353.6H723V352.3H724V352.4H725V352.6H726V352.9H727V351.2H728V352.7H729V352.2H730V353.3H731V352H732V353.3H733V353.3H734V352.8H735V352.4H736V353.1H737V352H738V352.7H739V353H740V352.9H741V352.8H742V352.9H743V352.7H744V352.8H745V352.9H746V352.4H747V352.1H748V351.7H749V350.4H750V352.2H751V351.7H752V350.6H753V351.7H754V352.3H755V351.6H756V352.2H757V352.3H758V352.4H759V352.7H760V350.6H761V352.6H762V351.6H763V352.8H764V351.6H765V352.7H766V351.8H767V352.1H768V352.1H769V351.3H770V351.5H771V352.2H772V351.1H773V351.7H774V351.6H775V350.2H776V351.6H777V349.2H778V348.6H779V350.1H780V380.8H781V417H782V432.9H783V440.2H784V444.2H785V447.3H786V448.6H787V449.9H788V451.1H789V451.9H790V452.5H791V453H792V453.7H793V453.8H794V454.1H795V454.4H796V454.8H797V454.5H798V455.1H799V454.8H800V455.1H801V455.6H802V455.4H803V455.5H804V455.8H805V455.7H806V455.6H807V455.9H808V455.7H809V456.1H810V455.8H811V456.4H812V455.4H813V456.4H814V455.9H815V456.5H816V456.6H817V456.5H818V456.6H819V456.7H820V456.3H821V456.3H822V456.3H823V456.1H824V456.4H825V456.5H826V456.6H827V456.8H828V456.8H829V456.9H830V456.1H831V456.7H832V456.7H833V455.8H834V456.5H835V456.7H836V456.8H837V456.9H838V456.9H839V456.9H840V455.5H841V456.2H842V456.8H843V455.7H844V455.2H845V456.6H846V457.1H847V456.9H848V456.5H849V456.9H850V457.1H851V455.3H852V457.1H853V456.7H854V456.7H855V456.1H856V456.8H857V456.7H858V456.7H859V456.8H860V455.5H861V457.4H862V457.3H863V456H864V457.4H865V455.5H866V457.1H867V455.8H868V456H869V457.3H870V457.1H871V457.2H872V456.2H873V456.1H874V457.2H875V457.1H876V455.8H877V457H878V456.8H879V457H880V456.8H881V456H882V457.2H883V457.1H884V456.6H885V456.7H886V456.8H887V456.1H888V457.1H889V454.7H890V457.4H891V457.4H892V456.1H893V456.5H894V456.7H895V457.3H896V456.7H897V456.8H898V456.4H899V457.4H900V457H901V456.7H902V456.9H903V457.2H904V457.2H905V456.2H906V457H907V457.1H908V456.8H909V456.6H910V457.4H911V456.1H912V457.2H913V456.6H914V456H915V456.6H916V456.7H917V457.3H918V457.3H919V456.9H920V457.3H921V457H922V456H923V457H924V457H925V456.8H926V457.3H927V457.2H928V457H929V456.9H930V457.4H931V457H932V456.7H933V456H934V456.3H935V456H936V456.1H937V456.9H938V456H939V456.2H940V456.8H941V457H942V457.3H943V457H944V456.4H945V456.9H946V456.9H947V455.8H948V457.3H949V457.3H950V456H951V456.1H952V457H953V457H954V456.7H955V456.7H956V455.8H957V457.1H958V456.9H959V457H960V457.2H961V456.3H962V456.8H963V456.6H964V456.1H965V457.4H966V457.1H967V457.1H968V457.2H969V455.9H970V456.9H971V457.3H972V456.3H973V457.1H974V456.9H975V457H976V456.2H977V457.3H978V456.3H979V455.8H980V457H981V457.1H982V456.6H983V457.4H984V457H985V455.8H986V456.3H987V457H988V457.3H989V455.6H990V456.8H991V457.3H992V456.9H993V455.9H994V456.4H995V457H996V457H997V456.8H998V455.9H999V456.7H1000V456.8H1001V457.1H1002V457.3H1003V455.2H1004V457.4H1005V456.5H1006V456.1H1007V455.7H1008V457.1H1009V456.3H1010V456.2H1011V456.9H1012V456.8H1013V457.4H1014V457H1015V456.4H1016V456.9H1017V457.3H1018V455.7H1019V456.1H1020V456.8H1021V456.7H1022V455.6H1023V456.9H1024V457.4H1025V457.2H1026V456.7H1027V457.1H1028V457.2H1029V456.8H1030V456.8H1031V457.2H1032V456.8H1033V456.7H1034V457.2H1035V456.8H1036V453.5H1037V446.5H1038V359.9H1039V335.9H1040V335.9H1041V340.6H1042V365.9H1043V363.8H1044V348.4H1045V349.2H1046V361.2H1047V350.4H1048V348.1H1049V359.1H1050V350.8H1051V352.2H1052V356.7H1053V358.7H1054V352.4H1055V350H1056V357.6H1057V352.5H1058V353.8H1059V356H1060V353.3H1061V354H1062V356.1H1063V354.9H1064V353.4H1065V354.4H1066V356.1H1067V352.3H1068V354H1069V355.5H1070V353.7H1071V351.2H1072V355.6H1073V354.6H1074V354.8H1075V354.8H1076V355.2H1077V353.8H1078V352.3H1079V354.8H1080V354.3H1081V354.6H1082V354.3H1083V354.3H1084V355H1085V354.1H1086V352.3H1087V353.5H1088V354.4H1089V353.6H1090V354.6H1091V353.7H1092V354.2H1093V354.2H1094V354.6H1095V354.5H1096V354.7H1097V353.8H1098V354.8H1099V353.7H1100V354.3H1101V380.8H1102V417.4H1103V433H1104V440.5H1105V444.6H1106V447.2H1107V448.8H1108V449.9H1109V450.8H1110V451.8H1111V452.4H1112V453.3H1113V453.7H1114V453.5H1115V453.9H1116V452.9H1117V452.2H1118V451.9H1119V452.2H1120V452.9H1121V453.9H1122V455H1123V455.4H1124V455.8H1125V455.6H1126V455.8H1127V456H1128V455.7H1129V455.8H1130V455.7H1131V455.9H1132V456.3H1133V455.9H1134V456.1H1135V456.2H1136V456.4H1137V456H1138V456.4H1139V455.8H1140V456.4H1141V456.3H1142V455.7H1143V456.3H1144V456.3H1145V456H1146V456.7H1147V456.4H1148V456.9H1149V456.5H1150V455.7H1151V456.8H1152V457H1153V456.5H1154V456.7H1155V456.6H1156V456.6H1157V456.7H1158V457H1159V457.1H1160V456.4H1161V457H1162V457.1H1163V457H1164V457.1H1165V455.8H1166V457.1H1167V455.9H1168V456.8H1169V456.4H1170V456.7H1171V456.7H1172V456.3H1173V456.8H1174V456.8H1175V456.3H1176V456.7H1177V456.1H1178V457H1179V456.9H1180V456.7H1181V457.1H1182V456.7H1183V457H1184V456.9H1185V456.9H1186V456.5H1187V457.4H1188V456.8H1189V457.3H1190V455.7H1191V455.6H1192V455.7H1193V456.8H1194V457.4H1195V457.4H1196V457.4H1197V457.1H1198V457H1199V457.3H1200V457.3H1201V457.2H1202V457.4H1203V463.1H1202V462.2H1201V462.5H1200V462.2H1199V462.1H1198V462H1197V462.2H1196V462.4H1195V461.6H1194V462.3H1193V461.7H1192V461.7H1191V461.8H1190V461.7H1189V463.1H1188V461.8H1187V462.9H1186V462.1H1185V462H1184V461.6H1183V461.6H1182V461.8H1181V462.3H1180V461.8H1179V462.2H1178V461.9H1177V462.1H1176V462.7H1175V462.3H1174V462.7H1173V461.9H1172V462.2H1171V462.3H1170V462H1169V463H1168V462.2H1167V462H1166V462.8H1165V461.8H1164V463.1H1163V463H1162V462.8H1161V462.4H1160V462.2H1159V462.3H1158V462.8H1157V462.5H1156V462H1155V462.7H1154V462.4H1153V462.1H1152V463.4H1151V462.4H1150V462.3H1149V462.1H1148V462.5H1147V462.1H1146V462.7H1145V462.2H1144V463.3H1143V462.5H1142V462.3H1141V462.6H1140V462.4H1139V462.5H1138V462.5H1137V462.5H1136V462.8H1135V462.7H1134V462.7H1133V462.7H1132V463H1131V463.1H1130V463.1H1129V463.3H1128V463.1H1127V463.2H1126V463.2H1125V463.4H1124V463.8H1123V464H1122V465.1H1121V466.1H1120V466.8H1119V467.1H1118V466.8H1117V466.1H1116V465.1H1115V464.9H1114V465.7H1113V466H1112V466.8H1111V467.4H1110V468H1109V469H1108V470H1107V471.8H1106V474.4H1105V478.5H1104V485.9H1103V501.7H1102V537.9H1101V564.9H1100V564.6H1099V565.4H1098V564.1H1097V565H1096V564H1095V565.1H1094V565.1H1093V564H1092V564.6H1091V565H1090V564.2H1089V567.7H1088V564.6H1087V563.8H1086V567H1085V564.2H1084V564.6H1083V565.2H1082V564.6H1081V564.7H1080V565.9H1079V564.2H1078V567.2H1077V564.9H1076V564.9H1075V564.9H1074V565.5H1073V563.9H1072V564.4H1071V564.9H1070V563.7H1069V564.6H1068V565H1067V563.9H1066V564.9H1065V566.9H1064V563.2H1063V562.4H1062V566H1061V565H1060V563.3H1059V566.3H1058V565.2H1057V561.9H1056V567.5H1055V566H1054V560.6H1053V560.8H1052V567H1051V568.9H1050V560.1H1049V568.8H1048V568.9H1047V557.8H1046V571.2H1045V572H1044V554.7H1043V553H1042V578.4H1041V583.1H1040V583.1H1039V559.1H1038V472.5H1037V465.5H1036V461.6H1035V462.5H1034V461.9H1033V461.9H1032V461.8H1031V462H1030V461.6H1029V462.2H1028V463.5H1027V462.6H1026V463.3H1025V462.5H1024V461.6H1023V461.6H1022V461.8H1021V462.8H1020V461.7H1019V463.3H1018V462.3H1017V461.6H1016V461.9H1015V463.1H1014V462.1H1013V461.6H1012V462.6H1011V462H1010V461.6H1009V462.3H1008V462.2H1007V462H1006V463.3H1005V463.5H1004V462H1003V463H1002V461.6H1001V462.1H1000V461.9H999V462H998V462.1H997V462H996V462.1H995V461.6H994V461.7H993V461.6H992V462.2H991V461.9H990V462.7H989V462.1H988V462.3H987V462H986V461.6H985V461.9H984V461.8H983V463H982V462.2H981V462.5H980V462.3H979V462.2H978V462H977V462.8H976V463H975V462H974V462H973V462.6H972V461.6H971V462.8H970V461.6H969V463.3H968V461.7H967V463.2H966V463.5H965V462.3H964V463.2H963V462.9H962V462H961V462H960V461.9H959V461.9H958V461.7H957V463H956V463.2H955V462.3H954V462.2H953V461.6H952V463.5H951V462H950V461.9H949V462.1H948V461.9H947V462.2H946V462.5H945V462.7H944V462.3H943V462.3H942V463.4H941V463H940V462.2H939V462.3H938V463.4H937V463.3H936V461.9H935V463H934V463.1H933V462.8H932V462.6H931V463.3H930V463.1H929V462.1H928V461.6H927V461.9H926V462.3H925V461.8H924V461.8H923V462.9H922V461.6H921V463.4H920V461.6H919V463H918V462.1H917V462.1H916V462.3H915V463.1H914V462.9H913V462.2H912V463.2H911V463.6H910V461.7H909V462H908V461.9H907V462H906V461.9H905V463.1H904V461.8H903V461.8H902V462.2H901V461.6H900V462.7H899V462.6H898V463.2H897V462H896V462.4H895V463.3H894V462.3H893V462H892V463.3H891V461.8H890V462.1H889V463H888V462.6H887V462.1H886V462.7H885V463.5H884V461.8H883V463H882V462.3H881V462H880V462H879V463.2H878V462.7H877V461.9H876V461.6H875V462.1H874V461.6H873V461.8H872V463.1H871V462.7H870V461.7H869V462.6H868V463.6H867V461.7H866V461.7H865V461.8H864V461.7H863V462.3H862V463.4H861V462.3H860V462.8H859V461.9H858V462.3H857V462.8H856V462.6H855V462.2H854V462.2H853V462.1H852V462.1H851V462.3H850V462H849V462H848V462H847V462.2H846V462.3H845V461.9H844V462.3H843V461.9H842V462.9H841V461.9H840V462.3H839V462.4H838V462.1H837V462.3H836V462.3H835V462.4H834V462.4H833V463.2H832V462.5H831V462.8H830V462.4H829V463.1H828V464.1H827V462.4H826V462.5H825V463.1H824V462.6H823V463.4H822V462.7H821V462.3H820V462.6H819V462.6H818V462.6H817V462.3H816V462.7H815V462.5H814V462.9H813V462.8H812V462.9H811V462.9H810V462.8H809V463.1H808V463H807V463.4H806V463.4H805V463.6H804V463.3H803V463.5H802V463.8H801V463.6H800V463.8H799V463.9H798V464H797V464.4H796V464.7H795V464.9H794V465H793V465.4H792V465.9H791V466.7H790V467H789V467.8H788V469.1H787V470H786V471.8H785V474.7H784V478.5H783V486.2H782V502H781V537.9H780V566.7H779V567.6H778V567.7H777V567.7H776V566.5H775V570H774V569.8H773V566.4H772V567.7H771V567.6H770V567.4H769V569.4H768V567.4H767V567.6H766V566.6H765V566.6H764V567.6H763V566.2H762V566.3H761V568.8H760V566.5H759V567.4H758V566.4H757V566.9H756V566.1H755V569.7H754V566.3H753V567.3H752V566.5H751V568.9H750V569.1H749V567.3H748V566.3H747V566.2H746V566H745V566.8H744V567.3H743V568H742V565.6H741V568.3H740V567H739V566.8H738V565.7H737V566.9H736V567.1H735V565.7H734V566.9H733V566H732V566.2H731V566.5H730V566.7H729V566.2H728V566.8H727V566.4H726V566.2H725V565.7H724V566.5H723V566.5H722V565.2H721V566.4H720V566.3H719V565.6H718V566.6H717V565.3H716V565.2H715V568.6H714V566.3H713V566.5H712V565.3H711V565.4H710V565.7H709V566.1H708V566.4H707V566.7H706V564.9H705V565.5H704V566.1H703V565.1H702V565.7H701V568H700V565.6H699V564.8H698V565H697V566.3H696V566.1H695V565.9H694V564.8H693V566H692V564.8H691V564.9H690V565.1H689V565.6H688V564.4H687V566.1H686V565.6H685V564.2H684V565.6H683V566.2H682V564.2H681V566H680V565.9H679V564.8H678V563.4H677V565.3H676V565.5H675V563.9H674V566.5H673V566.3H672V564H671V566.5H670V567.4H669V564.8H668V562.5H667V567.2H666V568H665V562.5H664V568H663V569.5H662V560.1H661V569H660V570.9H659V558.2H658V556.6H657V579.8H656V584.7H655V584.7H654V559.7H653V472.5H652V465.5H651V461.9H650V462.6H649V461.9H648V462.1H647V461.9H646V462H645V461.8H644V463H643V461.8H642V462H641V461.6H640V461.9H639V462.2H638V462.2H637V462.6H636V462H635V461.6H634V462.1H633V462.9H632V462.1H631V462H630V461.8H629V461.8H628V462.8H627V462.6H626V462H625V461.9H624V461.7H623V462.3H622V462.8H621V461.9H620V462.2H619V461.8H618V461.8H617V462.6H616V461.6H615V462.8H614V462.2H613V462.2H612V462.1H611V461.8H610V462.1H609V462.6H608V461.8H607V461.6H606V462H605V461.8H604V461.6H603V461.6H602V462.7H601V462.8H600V463.1H599V462.9H598V461.9H597V462.1H596V462.5H595V462.2H594V462.6H593V462.1H592V461.8H591V462.8H590V462H589V462.2H588V462.3H587V461.7H586V462.1H585V461.9H584V462.9H583V461.9H582V461.7H581V463.1H580V461.7H579V462.8H578V462.5H577V462.8H576V462.2H575V462H574V463.2H573V461.9H572V461.9H571V462.5H570V462H569V461.9H568V461.7H567V462.7H566V461.7H565V462.9H564V461.9H563V461.8H562V462H561V461.6H560V461.6H559V461.7H558V462.3H557V462.6H556V462H555V462.2H554V461.6H553V461.8H552V462H551V462.5H550V462.1H549V461.8H548V462.3H547V462.2H546V462.1H545V462H544V462H543V461.9H542V463.4H541V462.2H540V463H539V461.8H538V461.9H537V462.2H536V461.8H535V463.3H534V462.2H533V461.9H532V461.9H531V462.2H530V461.8H529V463.1H528V462H527V462.1H526V461.6H525V461.6H524V461.8H523V461.7H522V461.6H521V462.1H520V461.9H519V462.7H518V462.8H517V461.9H516V461.8H515V462.1H514V462H513V462.1H512V461.6H511V462H510V461.6H509V461.6H508V461.6H507V463H506V462.3H505V462.2H504V461.9H503V462H502V462.6H501V462.2H500V462H499V461.7H498V461.9H497V461.7H496V461.6H495V461.7H494V462.1H493V462.4H492V461.7H491V461.9H490V461.6H489V462.1H488V461.9H487V463.3H486V462.2H485V461.9H484V462.1H483V462.3H482V461.9H481V462H480V462H479V462.5H478V462.3H477V462.5H476V462.3H475V462.8H474V461.9H473V462.3H472V463.2H471V461.9H470V462.3H469V462.1H468V461.9H467V462.8H466V462.2H465V462.2H464V463H463V462.4H462V462.3H461V462H460V462H459V462.9H458V462H457V462.3H456V462.2H455V463.7H454V463.1H453V462.4H452V462.3H451V462.4H450V462H449V462.5H448V462.2H447V463.1H446V462H445V462.3H444V462.7H443V462.5H442V462.6H441V462.4H440V462.3H439V462.6H438V463H437V462.6H436V463.2H435V463H434V462.3H433V463H432V462.9H431V463.5H430V462.8H429V462.9H428V462.7H427V463.2H426V463.2H425V463.3H424V463.2H423V463.2H422V463.4H421V463.3H420V463.5H419V463.6H418V463.6H417V463.5H416V463.8H415V464.1H414V464.2H413V464.6H412V464.6H411V464.7H410V464.9H409V465.8H408V466H407V466.2H406V467.1H405V468H404V468.6H403V470.4H402V472H401V474.7H400V478.5H399V486.2H398V501.6H397V538.3H396V573.5H395V573.4H394V574.2H393V573.1H392V574.4H391V574.2H390V573.9H389V573.1H388V573.3H387V573.4H386V573.5H385V576.4H384V573.5H383V575.3H382V573.7H381V575.9H380V572.8H379V577.1H378V573H377V573.6H376V576.1H375V574.1H374V573.4H373V573.8H372V574H371V573.4H370V573H369V573.8H368V573.6H367V573.8H366V574.1H365V574.2H364V573.5H363V574.9H362V572.7H361V573.6H360V575.8H359V574.1H358V574.8H357V574.1H356V572.9H355V573.7H354V575.6H353V573H352V573.5H351V573.4H350V573.4H349V574H348V573.6H347V573.2H346V573.1H345V572.7H344V573.5H343V573.1H342V573.3H341V573.4H340V573.7H339V573.7H338V573.4H337V573.5H336V573.9H335V573.6H334V572.8H333V573.6H332V574H331V572.9H330V572.9H329V574H328V572.8H327V573.7H326V573.9H325V573.3H324V574H323V572.7H322V573.8H321V574.9H320V573.9H319V573.4H318V573H317V573.3H316V573.8H315V573H314V573.2H313V572.6H312V573.1H311V573.4H310V574.1H309V572.7H308V573.3H307V572.5H306V575.4H305V572.4H304V572.5H303V576H302V573.7H301V573.5H300V574.1H299V573.5H298V575.9H297V573.5H296V573.6H295V573.4H294V573.6H293V573.4H292V572.4H291V573.7H290V573.1H289V573.6H288V573.6H287V573.2H286V572.5H285V575.7H284V573.1H283V572.3H282V574H281V573.8H280V573.7H279V572.6H278V573.1H277V572.6H276V572.8H275V572.7H274V573.8H273V573.4H272V572.6H271V572.3H270V573.6H269V572.3H268V572.8H267V572.9H266V573.1H265V573.5H264V573.3H263V573.7H262V572.4H261V572.3H260V572.4H259V572.8H258V573.2H257V572.7H256V576H255V572.7H254V575.6H253V572.4H252V572.3H251V573.3H250V572.5H249V572.1H248V572.5H247V572.2H246V573.1H245V573.3H244V573.6H243V573.2H242V573.1H241V572.8H240V572.1H239V573.1H238V572.1H237V573H236V574.1H235V572.2H234V573.3H233V573.5H232V573.2H231V573.2H230V572.6H229V572.2H228V573H227V573.3H226V573.1H225V573.1H224V572.1H223V572.2H222V575H221V572.8H220V572.5H219V572H218V573.5H217V572.8H216V572.4H215V573.2H214V571.9H213V573.4H212V572.3H211V572H210V572.7H209V572.6H208V573.3H207V572.2H206V571.9H205V574.2H204V571.9H203V573.5H202V572.3H201V573.2H200V573H199V572H198V573.1H197V572.2H196V571.9H195V572.7H194V572.2H193V571.8H192V573.2H191V572.2H190V573.1H189V571.9H188V571.9H187V572.3H186V572.5H185V572.6H184V572.5H183V573.2H182V571.6H181V571.9H180V572.9H179V572.8H178V572.2H177V572.6H176V573.1H175V571.4H174V572.3H173V572.8H172V572.1H171V572.2H170V572.7H169V572.4H168V571.9H167V575.5H166V570.9H165V571H164V572.2H163V572.3H162V570.8H161V572.7H160V575H159V570.9H158V573H157V575H156V569.8H155V568.3H154V572.7H153V572.8H152V566.6H151V574.6H150V574.1H149V564.4H148V575.9H147V574.7H146V561.5H145V559.8H144V582.6H143V586H142V586H141V567.5H140V462.1H139V461.6H138V463.1H137V463H136V461.9H135V461.6H134V462.6H133V462H132V461.9H131V461.6H130V463.1H129V462.3H128V462.7H127V461.9H126V461.8H125V463H124V462H123V461.7H122V462H121V462.3H120V462.8H119V461.8H118V463H117V463.1H116V461.6H115V462.1H114V462.5H113V462H112V462.3H111V461.8H110V461.8H109V461.8H108V461.8H107V462.5H106V461.9H105V461.6H104V462.3H103V463.2H102V462.2H101V462.1H100V461.9H99V462.1H98V463H97V462.2H96V461.8H95V461.6H94V462.2H93V463H92V463.4H91V461.7H90V462.3H89V463.1H88V462.1H87V463.3H86V463.2H85V462H84V462.1H83V461.7H82V462.5H81V461.7H80V462.7H79V463.5H78V463.3H77V461.7H76V462.8H75V461.8H74V461.8H73V462.2H72V462.9H71V461.8H70V462.3H69V461.9H68V462H67V461.9H66V463.1H65V461.9H64V461.7H63V461.7H62V462.1H61V461.6H60V462.1H59V461.9H58V461.6H57V462.5H56V461.9H55V462.2H54V461.7H53V463.3H52V462.2H51V462.2H50V461.9H49V462.2H48V462H47V462H46V462.2H45V462.2H44V461.7H43V463.9H42V462.2H41V461.7H40Z" fill="#00ff00" shape-rendering="crispEdges"/>
<rect x="1171" y="367" width="27.4" height="13.4" fill="#000"/>
<text x="1172" y="378" font-size="12" fill="#ffff00" textLength="26" lengthAdjust="spacingAndGlyphs">1PPS</text>
<rect x="1165" y="447" width="33.4" height="11.3" fill="#000"/>
<text x="1165.6" y="458.2" font-size="11" fill="#00ff00" textLength="32.4" lengthAdjust="spacingAndGlyphs">ant out</text>
<g fill="#ffff00"><path d="M133.6 102.4 H145.2 L139.4 114 Z"/><rect x="134" y="117.2" width="11" height="2"/><rect x="138.2" y="117.2" width="2.8" height="11.6"/></g>
<path d="M140.4 327.2 L146.6 333.4 L140.4 339.6 L134.2 333.4 Z M131 333.4 H134.2 M146.6 333.4 H148.6" fill="none" stroke="#ffff00" stroke-width="1"/>
<path d="M139.6 597.4 L155.2 612.6 H124 Z" fill="none" stroke="#8c8c8c" stroke-width="1.7"/>
<path d="M1164.4 333.4 L1174.2 323.8 H1203 V342.9 H1174.2 Z" fill="#ffff00"/>
<text x="1179.4" y="338.7" font-size="14" fill="#000" textLength="16.4" lengthAdjust="spacingAndGlyphs" font-weight="bold">TL</text>
<path d="M0.5 369.5 H29.4 L38.6 378.4 L29.4 387.3 H0.5 Z" fill="#000" stroke="#807d00" stroke-width="1.2"/>
<text x="4.6" y="384.8" font-size="17.6" fill="#807d00" textLength="13.2" lengthAdjust="spacingAndGlyphs" stroke="#807d00" stroke-width="0.5" stroke-linejoin="round">C1</text>
<path d="M0 448.8 H29.4 L38.9 458.3 L29.4 467.8 H0 Z" fill="#00ff00"/>
<text x="4.6" y="464.8" font-size="17.6" fill="#000" textLength="16.4" lengthAdjust="spacingAndGlyphs" stroke="#000" stroke-width="0.5" stroke-linejoin="round">C2</text>
<path d="M39.5 100.5 H1203.5 V615.5 H39.5 Z" fill="none" stroke="#fff" stroke-width="1"/>
</g>
<g id="panel">
<rect x="0" y="617" width="1204" height="36" fill="#192024"/>
<rect x="0" y="617" width="50" height="36" fill="#2b353c"/>
<rect x="51" y="617" width="138" height="36" fill="#2b353c"/>
<rect x="191" y="617" width="138" height="36" fill="#0090f0"/>
<rect x="0" y="653" width="1204" height="3" fill="#0090f0"/>
<rect x="0" y="656" width="1204" height="126" fill="#192024"/>
<path d="M16.8 632.6 L25.3 623 L33.8 632.6 Z M16.8 637.6 L25.3 647 L33.8 637.6 Z" fill="#fff"/>
<text x="56.4" y="641.8" font-size="17.6" fill="#ffffff" textLength="59.4" lengthAdjust="spacingAndGlyphs" font-weight="bold">Measure</text>
<text x="196.2" y="641.8" font-size="17.6" fill="#ffffff" textLength="56.6" lengthAdjust="spacingAndGlyphs" font-weight="bold">Statistics</text>
<path d="M166 629.8 L177.4 641.2 M177.4 629.8 L166 641.2" stroke="#fff" stroke-width="2.2" fill="none"/>
<path d="M306.2 629.8 L317.6 641.2 M317.6 629.8 L306.2 641.2" stroke="#000" stroke-width="2.2" fill="none"/>
<rect x="10" y="701" width="1194" height="38" fill="#2b353c"/>
<text x="145.6" y="689.6" font-size="21.4" fill="#ffffff" textLength="37.6" lengthAdjust="spacingAndGlyphs" stroke="#ffffff" stroke-width="0.45" stroke-linejoin="round">Type</text>
<text x="275" y="689.6" font-size="21.4" fill="#ffffff" textLength="60.6" lengthAdjust="spacingAndGlyphs" stroke="#ffffff" stroke-width="0.45" stroke-linejoin="round">Current</text>
<text x="425.4" y="689.6" font-size="21.4" fill="#ffffff" textLength="31" lengthAdjust="spacingAndGlyphs" stroke="#ffffff" stroke-width="0.45" stroke-linejoin="round">Min</text>
<text x="575.4" y="689.6" font-size="21.4" fill="#ffffff" textLength="35.4" lengthAdjust="spacingAndGlyphs" stroke="#ffffff" stroke-width="0.45" stroke-linejoin="round">Max</text>
<text x="725.4" y="689.6" font-size="21.4" fill="#ffffff" textLength="45.8" lengthAdjust="spacingAndGlyphs" stroke="#ffffff" stroke-width="0.45" stroke-linejoin="round">Mean</text>
<text x="874.8" y="689.6" font-size="21.4" fill="#ffffff" textLength="57" lengthAdjust="spacingAndGlyphs" stroke="#ffffff" stroke-width="0.45" stroke-linejoin="round">StdDev</text>
<text x="1025.6" y="689.6" font-size="21.4" fill="#ffffff" textLength="96.4" lengthAdjust="spacingAndGlyphs" stroke="#ffffff" stroke-width="0.45" stroke-linejoin="round">Wave count</text>
<text x="21" y="727.8" font-size="21.4" fill="#ffffff" textLength="15.4" lengthAdjust="spacingAndGlyphs" stroke="#ffffff" stroke-width="0.45" stroke-linejoin="round">1:</text>
<text x="145.6" y="727.8" font-size="21.4" fill="#ffffff" textLength="52.2" lengthAdjust="spacingAndGlyphs" stroke="#ffffff" stroke-width="0.45" stroke-linejoin="round">DlyTrg</text>
<text x="276.8" y="727.8" font-size="21.4" fill="#ffffff" textLength="67.6" lengthAdjust="spacingAndGlyphs" stroke="#ffffff" stroke-width="0.45" stroke-linejoin="round">115.2 µs</text>
<text x="425.8" y="727.8" font-size="21.4" fill="#ffffff" textLength="52.8" lengthAdjust="spacingAndGlyphs" stroke="#ffffff" stroke-width="0.45" stroke-linejoin="round">-7.2 µs</text>
<text x="576.8" y="727.8" font-size="21.4" fill="#ffffff" textLength="67.6" lengthAdjust="spacingAndGlyphs" stroke="#ffffff" stroke-width="0.45" stroke-linejoin="round">183.6 µs</text>
<text x="726.2" y="727.8" font-size="21.4" fill="#ffffff" textLength="67.8" lengthAdjust="spacingAndGlyphs" stroke="#ffffff" stroke-width="0.45" stroke-linejoin="round">100.8 µs</text>
<text x="874.8" y="727.8" font-size="21.4" fill="#ffffff" textLength="79" lengthAdjust="spacingAndGlyphs" stroke="#ffffff" stroke-width="0.45" stroke-linejoin="round">59.148 µs</text>
<text x="1026.2" y="727.8" font-size="21.4" fill="#ffffff" textLength="29.6" lengthAdjust="spacingAndGlyphs" stroke="#ffffff" stroke-width="0.45" stroke-linejoin="round">100</text>
<text x="21" y="765.4" font-size="21.4" fill="#ffffff" textLength="15.4" lengthAdjust="spacingAndGlyphs" stroke="#ffffff" stroke-width="0.45" stroke-linejoin="round">2:</text>
<text x="145.6" y="765.4" font-size="21.4" fill="#ffffff" textLength="23.2" lengthAdjust="spacingAndGlyphs" stroke="#ffffff" stroke-width="0.45" stroke-linejoin="round">Bst</text>
<text x="275" y="765.4" font-size="21.4" fill="#ffffff" textLength="83.8" lengthAdjust="spacingAndGlyphs" stroke="#ffffff" stroke-width="0.45" stroke-linejoin="round">375.03 ms</text>
<text x="425.4" y="765.4" font-size="21.4" fill="#ffffff" textLength="103.4" lengthAdjust="spacingAndGlyphs" stroke="#ffffff" stroke-width="0.45" stroke-linejoin="round">374.9436 ms</text>
<text x="575.4" y="765.4" font-size="21.4" fill="#ffffff" textLength="93.4" lengthAdjust="spacingAndGlyphs" stroke="#ffffff" stroke-width="0.45" stroke-linejoin="round">375.066 ms</text>
<text x="725.4" y="765.4" font-size="21.4" fill="#ffffff" textLength="103.4" lengthAdjust="spacingAndGlyphs" stroke="#ffffff" stroke-width="0.45" stroke-linejoin="round">375.0012 ms</text>
<text x="874.8" y="765.4" font-size="21.4" fill="#ffffff" textLength="79" lengthAdjust="spacingAndGlyphs" stroke="#ffffff" stroke-width="0.45" stroke-linejoin="round">25.812 µs</text>
<text x="1026.2" y="765.4" font-size="21.4" fill="#ffffff" textLength="29.6" lengthAdjust="spacingAndGlyphs" stroke="#ffffff" stroke-width="0.45" stroke-linejoin="round">100</text>
<rect x="53" y="708" width="25" height="25" fill="#001800"/>
<rect x="54" y="709" width="23" height="23" fill="#00ff00"/>
<text x="58.8" y="725.8" font-size="15.6" fill="#003000" textLength="16.4" lengthAdjust="spacingAndGlyphs">C2</text>
<rect x="53" y="746" width="25" height="25" fill="#001800"/>
<rect x="54" y="747" width="23" height="23" fill="#00ff00"/>
<text x="58.8" y="763.8" font-size="15.6" fill="#003000" textLength="16.4" lengthAdjust="spacingAndGlyphs">C2</text>
</g>
<g id="channels">
<rect x="0" y="782" width="1204" height="42" fill="#2b353c"/>
<rect x="0" y="782" width="43" height="42" fill="#807d00"/>
<rect x="43" y="782" width="156" height="2" fill="#807d00"/>
<rect x="199" y="782" width="2" height="42" fill="#000"/>
<rect x="201" y="782" width="43" height="42" fill="#00ff00"/>
<rect x="244" y="782" width="156" height="2" fill="#00ff00"/>
<rect x="400" y="782" width="2" height="42" fill="#000"/>
<text x="11.2" y="809.6" font-size="20.4" fill="#000" textLength="17.6" lengthAdjust="spacingAndGlyphs" stroke="#000" stroke-width="0.5" stroke-linejoin="round">C1</text>
<text x="212.4" y="809.6" font-size="20.4" fill="#000" textLength="19.4" lengthAdjust="spacingAndGlyphs" stroke="#000" stroke-width="0.5" stroke-linejoin="round">C2</text>
<text x="67.4" y="812.4" font-size="24.4" fill="#ffffff" textLength="28.6" lengthAdjust="spacingAndGlyphs" stroke="#ffffff" stroke-width="0.5" stroke-linejoin="round">1.4</text>
<text x="100.4" y="812.4" font-size="19.4" fill="#ffffff" textLength="9.8" lengthAdjust="spacingAndGlyphs" stroke="#ffffff" stroke-width="0.5" stroke-linejoin="round">V</text>
<text x="110.2" y="815.6" font-size="28" fill="#ffffff" textLength="8.6" lengthAdjust="spacingAndGlyphs" stroke="#ffffff" stroke-width="0.4" stroke-linejoin="round">/</text>
<text x="255.8" y="812.4" font-size="24.4" fill="#ffffff" textLength="41.6" lengthAdjust="spacingAndGlyphs" stroke="#ffffff" stroke-width="0.5" stroke-linejoin="round">2.86</text>
<text x="301.2" y="812.4" font-size="19.4" fill="#ffffff" textLength="9.8" lengthAdjust="spacingAndGlyphs" stroke="#ffffff" stroke-width="0.5" stroke-linejoin="round">V</text>
<text x="310.8" y="815.6" font-size="28" fill="#ffffff" textLength="8.6" lengthAdjust="spacingAndGlyphs" stroke="#ffffff" stroke-width="0.4" stroke-linejoin="round">/</text>
<text x="162.8" y="794.6" font-size="10.6" fill="#fff" textLength="5.6" lengthAdjust="spacingAndGlyphs" stroke="#fff" stroke-width="0.2" stroke-linejoin="round">B</text>
<text x="169.6" y="801" font-size="9.6" fill="#fff" textLength="7.6" lengthAdjust="spacingAndGlyphs" stroke="#fff" stroke-width="0.2" stroke-linejoin="round">W</text>
<text x="181.4" y="798.9" font-size="15.4" fill="#ffffff" textLength="15.6" lengthAdjust="spacingAndGlyphs" font-weight="bold">DC</text>
<text x="382.6" y="798.9" font-size="15.4" fill="#ffffff" textLength="14.8" lengthAdjust="spacingAndGlyphs" font-weight="bold">AC</text>
<text x="184.8" y="820.8" font-size="12.6" fill="#fff" textLength="12.4" lengthAdjust="spacingAndGlyphs" stroke="#fff" stroke-width="0.2" stroke-linejoin="round">1:1</text>
<text x="385.6" y="820.8" font-size="12.6" fill="#fff" textLength="12.4" lengthAdjust="spacingAndGlyphs" stroke="#fff" stroke-width="0.2" stroke-linejoin="round">1:1</text>
</g>
</svg>
</div>
</body>
</html>
